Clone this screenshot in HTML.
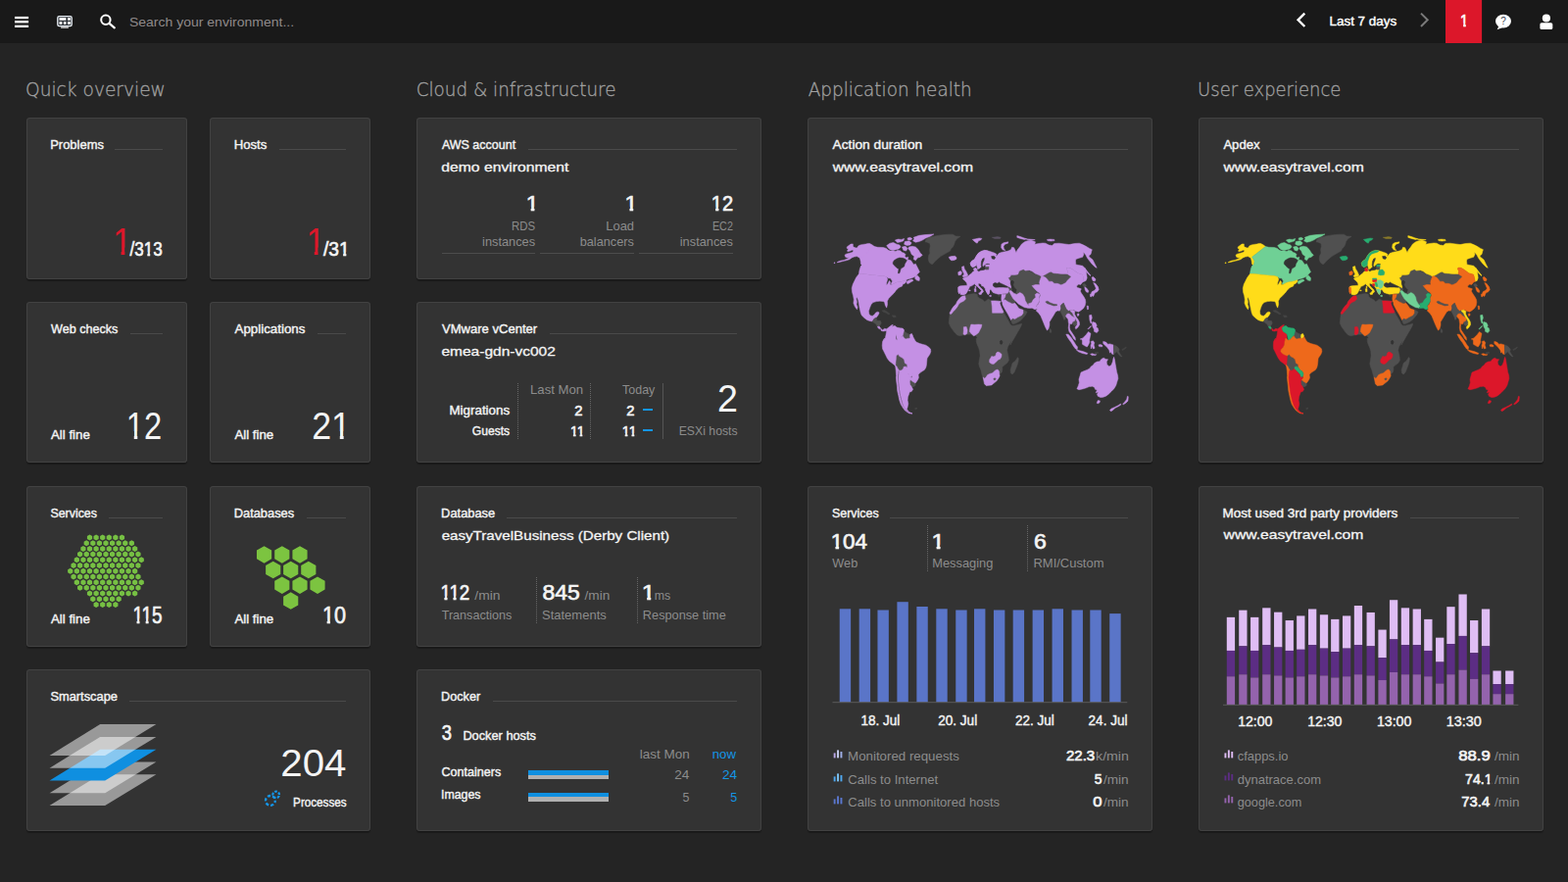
<!DOCTYPE html>
<html lang="en">
<head>
<meta charset="utf-8">
<title>Dashboard</title>
<style>
*{box-sizing:border-box}
html,body{margin:0;padding:0}
body{width:1600px;height:900px;overflow:hidden;background:#242424;font-family:"Liberation Sans",sans-serif;position:relative;color:#f4f4f4}
.topbar{position:absolute;background:#191919}
main{position:absolute;left:0;top:0;width:1600px;height:900px}
.tile{position:absolute;background:#333;border-radius:3.5px;box-shadow:inset 0 0 0 1px #424242,0 1.5px 1px rgba(0,0,0,.3)}
.t{position:absolute;white-space:nowrap;line-height:1;transform-origin:0 50%;margin:0;font-weight:400;font-style:normal}
.tt{-webkit-text-stroke:.4px currentColor}
.st{-webkit-text-stroke:.3px currentColor}
.nm{-webkit-text-stroke:.65px currentColor}
.dl{font-family:"DejaVu Sans Light","Liberation Sans",sans-serif}
.r{position:absolute;display:block}
.g{position:absolute;display:block;overflow:visible}
h2{position:absolute;margin:0;font-weight:400;font-size:20px;line-height:1;color:#a2a2a2;white-space:nowrap;transform-origin:0 50%;font-family:"DejaVu Sans Light","Liberation Sans",sans-serif;-webkit-text-stroke:.3px currentColor}
</style>
</head>
<body>
<header class="topbar" style="left:0px;top:0px;width:1600px;height:44px">
<svg class="g" style="left:0px;top:0px;" width="1600" height="44" viewBox="0 0 1600 44"><g fill="#fff"><rect x="15" y="16.9" width="14.1" height="2.3"/><rect x="15" y="21.1" width="14.1" height="2.3"/><rect x="15" y="25.7" width="14.1" height="2.3"/></g><rect x="58.8" y="16.7" width="14.4" height="9.9" rx="1.6" fill="#2a2f35" stroke="#eef4fa" stroke-width="1.3"/><g fill="#fff"><rect x="60.5" y="18.1" width="6.9" height="2.7"/><rect x="69" y="18.1" width="2.9" height="2.7"/><rect x="60.5" y="22.1" width="2.9" height="2.8"/><rect x="64.9" y="22.1" width="2.6" height="2.8"/><rect x="69" y="22.1" width="2.9" height="2.8"/></g><rect x="62.1" y="27.3" width="7.8" height="1.5" fill="#d8d8d8"/><circle cx="107.9" cy="20.3" r="4.7" fill="none" stroke="#fff" stroke-width="2"/><path d="M111.5 23.8L116.8 28.4" stroke="#fff" stroke-width="2.2" stroke-linecap="round"/><path d="M1331.3 13.6L1324.6 20.3L1331.3 27" fill="none" stroke="#fff" stroke-width="2.4"/><path d="M1450 13.6L1456.7 20.3L1450 27" fill="none" stroke="#7a7a7a" stroke-width="2"/><rect x="1475" y="0" width="37.1" height="44" fill="#dc172a"/><ellipse cx="1534" cy="21.6" rx="8" ry="6.9" fill="#fff"/><path d="M1529.5 26.5L1527.6 30.2L1533 28.3Z" fill="#fff"/><circle cx="1577.9" cy="18.5" r="4.1" fill="#fff"/><rect x="1571.4" y="23.3" width="12.9" height="6.7" rx="1.6" fill="#fff"/></svg>
<span class="t" style="left:131px;top:16px;font-size:13.2px;color:#8f8a8a;transform:translateX(0.88px) scaleX(1.0625);">Search your environment...</span>
<span class="t tt" style="left:1356px;top:15px;font-size:13px;color:#fff;transform:translateX(0.58px) scaleX(1.0303);">Last 7 days</span>
<span class="t nm" style="left:1490px;top:13px;font-size:17px;clip-path:polygon(-2px -2px,calc(100% + 2px) -2px,calc(100% + 2px) calc(100% + 2px),9.77px calc(100% + 2px),9.77px 10.6px,6.58px 10.6px,6.58px calc(100% + 2px),3.55px calc(100% + 2px),3.55px 10.6px,-0.3px 10.6px,-0.3px calc(100% + 2px),-2px calc(100% + 2px));color:#fff;transform:translateX(0.12px) scaleX(0.8561);">1</span>
<span class="t" style="left:1531px;top:17px;font-size:10px;color:#3a4450;transform:translateX(0.2px);">?</span>
</header>
<main>
<section>
<h2 style="left:26px;top:81px;transform:translateX(0.01px) scaleX(0.9300)">Quick overview</h2>
<article class="tile" style="left:27px;top:120px;width:164px;height:165px">
<h3 class="t tt" style="left:24px;top:21px;font-size:13px;transform:translateX(0.21px) scaleX(0.9960);">Problems</h3>
<i class="r" style="left:90.4px;top:32px;width:48.8px;height:1px;background:#4a4a4a;"></i>
<span class="t" style="left:88px;top:108px;font-size:38px;clip-path:polygon(-2px -2px,calc(100% + 2px) -2px,calc(100% + 2px) calc(100% + 2px),21.44px calc(100% + 2px),21.44px 24.4px,13.32px 24.4px,13.32px calc(100% + 2px),9.2px calc(100% + 2px),9.2px 24.4px,-0.3px 24.4px,-0.3px calc(100% + 2px),-2px calc(100% + 2px));color:#dc172a;transform:translateX(0.06px) scaleX(0.9278);">1</span>
<span class="t nm" style="left:105px;top:124px;font-size:20px;clip-path:polygon(-2px -2px,calc(100% + 2px) -2px,calc(100% + 2px) calc(100% + 2px),28.11px calc(100% + 2px),28.11px 13px,24.29px 13px,24.29px calc(100% + 2px),20.99px calc(100% + 2px),20.99px 13px,16.39px 13px,16.39px calc(100% + 2px),-2px calc(100% + 2px));transform:translateX(0.45px) scaleX(0.8546);">/313</span>
</article>
<article class="tile" style="left:214px;top:120px;width:164px;height:165px">
<h3 class="t tt" style="left:24px;top:21px;font-size:13px;transform:translateX(0.68px) scaleX(1.0115);">Hosts</h3>
<i class="r" style="left:70.6px;top:32px;width:68.6px;height:1px;background:#4a4a4a;"></i>
<span class="t" style="left:98px;top:108px;font-size:38px;clip-path:polygon(-2px -2px,calc(100% + 2px) -2px,calc(100% + 2px) calc(100% + 2px),21.44px calc(100% + 2px),21.44px 24.4px,13.32px 24.4px,13.32px calc(100% + 2px),9.2px calc(100% + 2px),9.2px 24.4px,-0.3px 24.4px,-0.3px calc(100% + 2px),-2px calc(100% + 2px));color:#dc172a;transform:translateX(0.38px) scaleX(0.9132);">1</span>
<span class="t nm" style="left:115px;top:124px;font-size:20px;clip-path:polygon(-2px -2px,calc(100% + 2px) -2px,calc(100% + 2px) calc(100% + 2px),28.11px calc(100% + 2px),28.11px 13px,24.29px 13px,24.29px calc(100% + 2px),20.99px calc(100% + 2px),20.99px 13px,16.39px 13px,16.39px calc(100% + 2px),-2px calc(100% + 2px));transform:translateX(0.95px) scaleX(0.9631);">/31</span>
</article>
<article class="tile" style="left:27px;top:308px;width:164px;height:164px">
<h3 class="t tt" style="left:25px;top:21px;font-size:13px;transform:scaleX(0.9679);">Web checks</h3>
<i class="r" style="left:105.7px;top:32px;width:33.5px;height:1px;background:#4a4a4a;"></i>
<span class="t tt" style="left:24px;top:129px;font-size:13px;transform:translateX(0.98px) scaleX(1.0214);">All fine</span>
<span class="t" style="left:101px;top:107px;font-size:39.5px;clip-path:polygon(-2px -2px,calc(100% + 2px) -2px,calc(100% + 2px) calc(100% + 2px),22.27px calc(100% + 2px),22.27px 25.1px,13.83px 25.1px,13.83px calc(100% + 2px),9.57px calc(100% + 2px),9.57px 25.1px,-0.3px 25.1px,-0.3px calc(100% + 2px),-2px calc(100% + 2px));transform:translateX(0.84px) scaleX(0.8271);">12</span>
</article>
<article class="tile" style="left:214px;top:308px;width:164px;height:164px">
<h3 class="t tt" style="left:25px;top:21px;font-size:13px;transform:translateX(0.58px) scaleX(1.0237);">Applications</h3>
<i class="r" style="left:109.9px;top:32px;width:29.3px;height:1px;background:#4a4a4a;"></i>
<span class="t tt" style="left:25px;top:129px;font-size:13px;transform:translateX(0.42px) scaleX(1.0201);">All fine</span>
<span class="t" style="left:104px;top:107px;font-size:39.5px;clip-path:polygon(-2px -2px,calc(100% + 2px) -2px,calc(100% + 2px) calc(100% + 2px),44.24px calc(100% + 2px),44.24px 25.1px,35.8px 25.1px,35.8px calc(100% + 2px),31.54px calc(100% + 2px),31.54px 25.1px,21.67px 25.1px,21.67px calc(100% + 2px),-2px calc(100% + 2px));transform:translateX(0.22px) scaleX(0.9056);">21</span>
</article>
<article class="tile" style="left:27px;top:496px;width:164px;height:164px">
<h3 class="t tt" style="left:24px;top:21px;font-size:13px;transform:translateX(0.4px) scaleX(0.9540);">Services</h3>
<i class="r" style="left:84.2px;top:32px;width:55px;height:1px;background:#4a4a4a;"></i>
<svg class="g" style="left:37px;top:46px;" width="90" height="82" viewBox="64 542 90 82"><path fill="#76c043" d="M91.52 545.5L94.12 547L94.12 550L91.52 551.5L88.92 550L88.92 547ZM98.11 545.5L100.71 547L100.71 550L98.11 551.5L95.51 550L95.51 547ZM104.7 545.5L107.3 547L107.3 550L104.7 551.5L102.1 550L102.1 547ZM111.29 545.5L113.89 547L113.89 550L111.29 551.5L108.69 550L108.69 547ZM117.88 545.5L120.48 547L120.48 550L117.88 551.5L115.28 550L115.28 547ZM124.47 545.5L127.07 547L127.07 550L124.47 551.5L121.87 550L121.87 547ZM88.22 551.21L90.82 552.71L90.82 555.71L88.22 557.21L85.63 555.71L85.63 552.71ZM94.81 551.21L97.41 552.71L97.41 555.71L94.81 557.21L92.22 555.71L92.22 552.71ZM101.41 551.21L104 552.71L104 555.71L101.41 557.21L98.81 555.71L98.81 552.71ZM108 551.21L110.59 552.71L110.59 555.71L108 557.21L105.4 555.71L105.4 552.71ZM114.59 551.21L117.18 552.71L117.18 555.71L114.59 557.21L111.99 555.71L111.99 552.71ZM121.17 551.21L123.77 552.71L123.77 555.71L121.17 557.21L118.58 555.71L118.58 552.71ZM127.77 551.21L130.36 552.71L130.36 555.71L127.77 557.21L125.17 555.71L125.17 552.71ZM134.35 551.21L136.95 552.71L136.95 555.71L134.35 557.21L131.76 555.71L131.76 552.71ZM84.93 556.91L87.53 558.41L87.53 561.41L84.93 562.91L82.33 561.41L82.33 558.41ZM91.52 556.91L94.12 558.41L94.12 561.41L91.52 562.91L88.92 561.41L88.92 558.41ZM98.11 556.91L100.71 558.41L100.71 561.41L98.11 562.91L95.51 561.41L95.51 558.41ZM104.7 556.91L107.3 558.41L107.3 561.41L104.7 562.91L102.1 561.41L102.1 558.41ZM111.29 556.91L113.89 558.41L113.89 561.41L111.29 562.91L108.69 561.41L108.69 558.41ZM117.88 556.91L120.48 558.41L120.48 561.41L117.88 562.91L115.28 561.41L115.28 558.41ZM124.47 556.91L127.07 558.41L127.07 561.41L124.47 562.91L121.87 561.41L121.87 558.41ZM131.06 556.91L133.66 558.41L133.66 561.41L131.06 562.91L128.46 561.41L128.46 558.41ZM137.65 556.91L140.25 558.41L140.25 561.41L137.65 562.91L135.05 561.41L135.05 558.41ZM81.64 562.62L84.23 564.12L84.23 567.12L81.64 568.62L79.04 567.12L79.04 564.12ZM88.22 562.62L90.82 564.12L90.82 567.12L88.22 568.62L85.63 567.12L85.63 564.12ZM94.81 562.62L97.41 564.12L97.41 567.12L94.81 568.62L92.22 567.12L92.22 564.12ZM101.41 562.62L104 564.12L104 567.12L101.41 568.62L98.81 567.12L98.81 564.12ZM108 562.62L110.59 564.12L110.59 567.12L108 568.62L105.4 567.12L105.4 564.12ZM114.59 562.62L117.18 564.12L117.18 567.12L114.59 568.62L111.99 567.12L111.99 564.12ZM121.17 562.62L123.77 564.12L123.77 567.12L121.17 568.62L118.58 567.12L118.58 564.12ZM127.77 562.62L130.36 564.12L130.36 567.12L127.77 568.62L125.17 567.12L125.17 564.12ZM134.35 562.62L136.95 564.12L136.95 567.12L134.35 568.62L131.76 567.12L131.76 564.12ZM140.94 562.62L143.54 564.12L143.54 567.12L140.94 568.62L138.35 567.12L138.35 564.12ZM78.34 568.32L80.94 569.82L80.94 572.82L78.34 574.32L75.74 572.82L75.74 569.82ZM84.93 568.32L87.53 569.82L87.53 572.82L84.93 574.32L82.33 572.82L82.33 569.82ZM91.52 568.32L94.12 569.82L94.12 572.82L91.52 574.32L88.92 572.82L88.92 569.82ZM98.11 568.32L100.71 569.82L100.71 572.82L98.11 574.32L95.51 572.82L95.51 569.82ZM104.7 568.32L107.3 569.82L107.3 572.82L104.7 574.32L102.1 572.82L102.1 569.82ZM111.29 568.32L113.89 569.82L113.89 572.82L111.29 574.32L108.69 572.82L108.69 569.82ZM117.88 568.32L120.48 569.82L120.48 572.82L117.88 574.32L115.28 572.82L115.28 569.82ZM124.47 568.32L127.07 569.82L127.07 572.82L124.47 574.32L121.87 572.82L121.87 569.82ZM131.06 568.32L133.66 569.82L133.66 572.82L131.06 574.32L128.46 572.82L128.46 569.82ZM137.65 568.32L140.25 569.82L140.25 572.82L137.65 574.32L135.05 572.82L135.05 569.82ZM144.24 568.32L146.84 569.82L146.84 572.82L144.24 574.32L141.64 572.82L141.64 569.82ZM75.05 574.02L77.64 575.52L77.64 578.52L75.05 580.02L72.45 578.52L72.45 575.52ZM81.64 574.02L84.23 575.52L84.23 578.52L81.64 580.02L79.04 578.52L79.04 575.52ZM88.22 574.02L90.82 575.52L90.82 578.52L88.22 580.02L85.63 578.52L85.63 575.52ZM94.81 574.02L97.41 575.52L97.41 578.52L94.81 580.02L92.22 578.52L92.22 575.52ZM101.41 574.02L104 575.52L104 578.52L101.41 580.02L98.81 578.52L98.81 575.52ZM108 574.02L110.59 575.52L110.59 578.52L108 580.02L105.4 578.52L105.4 575.52ZM114.59 574.02L117.18 575.52L117.18 578.52L114.59 580.02L111.99 578.52L111.99 575.52ZM121.17 574.02L123.77 575.52L123.77 578.52L121.17 580.02L118.58 578.52L118.58 575.52ZM127.77 574.02L130.36 575.52L130.36 578.52L127.77 580.02L125.17 578.52L125.17 575.52ZM134.35 574.02L136.95 575.52L136.95 578.52L134.35 580.02L131.76 578.52L131.76 575.52ZM140.94 574.02L143.54 575.52L143.54 578.52L140.94 580.02L138.35 578.52L138.35 575.52ZM71.75 579.73L74.35 581.23L74.35 584.23L71.75 585.73L69.15 584.23L69.15 581.23ZM78.34 579.73L80.94 581.23L80.94 584.23L78.34 585.73L75.74 584.23L75.74 581.23ZM84.93 579.73L87.53 581.23L87.53 584.23L84.93 585.73L82.33 584.23L82.33 581.23ZM91.52 579.73L94.12 581.23L94.12 584.23L91.52 585.73L88.92 584.23L88.92 581.23ZM98.11 579.73L100.71 581.23L100.71 584.23L98.11 585.73L95.51 584.23L95.51 581.23ZM104.7 579.73L107.3 581.23L107.3 584.23L104.7 585.73L102.1 584.23L102.1 581.23ZM111.29 579.73L113.89 581.23L113.89 584.23L111.29 585.73L108.69 584.23L108.69 581.23ZM117.88 579.73L120.48 581.23L120.48 584.23L117.88 585.73L115.28 584.23L115.28 581.23ZM124.47 579.73L127.07 581.23L127.07 584.23L124.47 585.73L121.87 584.23L121.87 581.23ZM131.06 579.73L133.66 581.23L133.66 584.23L131.06 585.73L128.46 584.23L128.46 581.23ZM137.65 579.73L140.25 581.23L140.25 584.23L137.65 585.73L135.05 584.23L135.05 581.23ZM75.05 585.43L77.64 586.93L77.64 589.93L75.05 591.43L72.45 589.93L72.45 586.93ZM81.64 585.43L84.23 586.93L84.23 589.93L81.64 591.43L79.04 589.93L79.04 586.93ZM88.22 585.43L90.82 586.93L90.82 589.93L88.22 591.43L85.63 589.93L85.63 586.93ZM94.81 585.43L97.41 586.93L97.41 589.93L94.81 591.43L92.22 589.93L92.22 586.93ZM101.41 585.43L104 586.93L104 589.93L101.41 591.43L98.81 589.93L98.81 586.93ZM108 585.43L110.59 586.93L110.59 589.93L108 591.43L105.4 589.93L105.4 586.93ZM114.59 585.43L117.18 586.93L117.18 589.93L114.59 591.43L111.99 589.93L111.99 586.93ZM121.17 585.43L123.77 586.93L123.77 589.93L121.17 591.43L118.58 589.93L118.58 586.93ZM127.77 585.43L130.36 586.93L130.36 589.93L127.77 591.43L125.17 589.93L125.17 586.93ZM134.35 585.43L136.95 586.93L136.95 589.93L134.35 591.43L131.76 589.93L131.76 586.93ZM140.94 585.43L143.54 586.93L143.54 589.93L140.94 591.43L138.35 589.93L138.35 586.93ZM78.34 591.14L80.94 592.64L80.94 595.64L78.34 597.14L75.74 595.64L75.74 592.64ZM84.93 591.14L87.53 592.64L87.53 595.64L84.93 597.14L82.33 595.64L82.33 592.64ZM91.52 591.14L94.12 592.64L94.12 595.64L91.52 597.14L88.92 595.64L88.92 592.64ZM98.11 591.14L100.71 592.64L100.71 595.64L98.11 597.14L95.51 595.64L95.51 592.64ZM104.7 591.14L107.3 592.64L107.3 595.64L104.7 597.14L102.1 595.64L102.1 592.64ZM111.29 591.14L113.89 592.64L113.89 595.64L111.29 597.14L108.69 595.64L108.69 592.64ZM117.88 591.14L120.48 592.64L120.48 595.64L117.88 597.14L115.28 595.64L115.28 592.64ZM124.47 591.14L127.07 592.64L127.07 595.64L124.47 597.14L121.87 595.64L121.87 592.64ZM131.06 591.14L133.66 592.64L133.66 595.64L131.06 597.14L128.46 595.64L128.46 592.64ZM137.65 591.14L140.25 592.64L140.25 595.64L137.65 597.14L135.05 595.64L135.05 592.64ZM144.24 591.14L146.84 592.64L146.84 595.64L144.24 597.14L141.64 595.64L141.64 592.64ZM81.64 596.85L84.23 598.35L84.23 601.35L81.64 602.85L79.04 601.35L79.04 598.35ZM88.22 596.85L90.82 598.35L90.82 601.35L88.22 602.85L85.63 601.35L85.63 598.35ZM94.81 596.85L97.41 598.35L97.41 601.35L94.81 602.85L92.22 601.35L92.22 598.35ZM101.41 596.85L104 598.35L104 601.35L101.41 602.85L98.81 601.35L98.81 598.35ZM108 596.85L110.59 598.35L110.59 601.35L108 602.85L105.4 601.35L105.4 598.35ZM114.59 596.85L117.18 598.35L117.18 601.35L114.59 602.85L111.99 601.35L111.99 598.35ZM121.17 596.85L123.77 598.35L123.77 601.35L121.17 602.85L118.58 601.35L118.58 598.35ZM127.77 596.85L130.36 598.35L130.36 601.35L127.77 602.85L125.17 601.35L125.17 598.35ZM134.35 596.85L136.95 598.35L136.95 601.35L134.35 602.85L131.76 601.35L131.76 598.35ZM140.94 596.85L143.54 598.35L143.54 601.35L140.94 602.85L138.35 601.35L138.35 598.35ZM91.52 602.55L94.12 604.05L94.12 607.05L91.52 608.55L88.92 607.05L88.92 604.05ZM98.11 602.55L100.71 604.05L100.71 607.05L98.11 608.55L95.51 607.05L95.51 604.05ZM104.7 602.55L107.3 604.05L107.3 607.05L104.7 608.55L102.1 607.05L102.1 604.05ZM111.29 602.55L113.89 604.05L113.89 607.05L111.29 608.55L108.69 607.05L108.69 604.05ZM117.88 602.55L120.48 604.05L120.48 607.05L117.88 608.55L115.28 607.05L115.28 604.05ZM124.47 602.55L127.07 604.05L127.07 607.05L124.47 608.55L121.87 607.05L121.87 604.05ZM131.06 602.55L133.66 604.05L133.66 607.05L131.06 608.55L128.46 607.05L128.46 604.05ZM137.65 602.55L140.25 604.05L140.25 607.05L137.65 608.55L135.05 607.05L135.05 604.05ZM94.81 608.25L97.41 609.75L97.41 612.75L94.81 614.25L92.22 612.75L92.22 609.75ZM101.41 608.25L104 609.75L104 612.75L101.41 614.25L98.81 612.75L98.81 609.75ZM108 608.25L110.59 609.75L110.59 612.75L108 614.25L105.4 612.75L105.4 609.75ZM114.59 608.25L117.18 609.75L117.18 612.75L114.59 614.25L111.99 612.75L111.99 609.75ZM121.17 608.25L123.77 609.75L123.77 612.75L121.17 614.25L118.58 612.75L118.58 609.75ZM98.11 613.96L100.71 615.46L100.71 618.46L98.11 619.96L95.51 618.46L95.51 615.46ZM104.7 613.96L107.3 615.46L107.3 618.46L104.7 619.96L102.1 618.46L102.1 615.46ZM111.29 613.96L113.89 615.46L113.89 618.46L111.29 619.96L108.69 618.46L108.69 615.46ZM117.88 613.96L120.48 615.46L120.48 618.46L117.88 619.96L115.28 618.46L115.28 615.46Z"/></svg>
<span class="t tt" style="left:24px;top:129px;font-size:13px;transform:translateX(0.98px) scaleX(1.0214);">All fine</span>
<span class="t nm" style="left:108px;top:120px;font-size:24px;clip-path:polygon(-2px -2px,calc(100% + 2px) -2px,calc(100% + 2px) calc(100% + 2px),25.22px calc(100% + 2px),25.22px 15.2px,20.52px 15.2px,20.52px calc(100% + 2px),16.86px calc(100% + 2px),16.86px 15.2px,8.96px 15.2px,8.96px calc(100% + 2px),5.3px calc(100% + 2px),5.3px 15.2px,-0.3px 15.2px,-0.3px calc(100% + 2px),-2px calc(100% + 2px));transform:translateX(0.39px) scaleX(0.7891);">115</span>
</article>
<article class="tile" style="left:214px;top:496px;width:164px;height:164px">
<h3 class="t tt" style="left:24px;top:21px;font-size:13px;transform:translateX(0.7px) scaleX(0.9892);">Databases</h3>
<i class="r" style="left:99px;top:32px;width:40.2px;height:1px;background:#4a4a4a;"></i>
<svg class="g" style="left:44px;top:58px;" width="78" height="70" viewBox="258 554 78 70"><path fill="#7cc440" d="M269.55 557.15L277.13 561.52L277.13 570.27L269.55 574.65L261.97 570.27L261.97 561.52ZM287.8 557.15L295.38 561.52L295.38 570.27L287.8 574.65L280.22 570.27L280.22 561.52ZM306 557.15L313.58 561.52L313.58 570.27L306 574.65L298.42 570.27L298.42 561.52ZM278.7 572.75L286.28 577.12L286.28 585.88L278.7 590.25L271.12 585.88L271.12 577.12ZM296.7 572.75L304.28 577.12L304.28 585.88L296.7 590.25L289.12 585.88L289.12 577.12ZM314.8 572.75L322.38 577.12L322.38 585.88L314.8 590.25L307.22 585.88L307.22 577.12ZM287.8 588.45L295.38 592.83L295.38 601.58L287.8 605.95L280.22 601.58L280.22 592.83ZM306 588.45L313.58 592.83L313.58 601.58L306 605.95L298.42 601.58L298.42 592.83ZM324 588.45L331.58 592.83L331.58 601.58L324 605.95L316.42 601.58L316.42 592.83ZM296.7 604.35L304.28 608.73L304.28 617.48L296.7 621.85L289.12 617.48L289.12 608.73Z"/></svg>
<span class="t tt" style="left:25px;top:129px;font-size:13px;transform:translateX(0.42px) scaleX(1.0201);">All fine</span>
<span class="t nm" style="left:114px;top:120px;font-size:24px;clip-path:polygon(-2px -2px,calc(100% + 2px) -2px,calc(100% + 2px) calc(100% + 2px),13.66px calc(100% + 2px),13.66px 15.2px,8.96px 15.2px,8.96px calc(100% + 2px),5.3px calc(100% + 2px),5.3px 15.2px,-0.3px 15.2px,-0.3px calc(100% + 2px),-2px calc(100% + 2px));transform:translateX(0.9px) scaleX(0.9013);">10</span>
</article>
<article class="tile" style="left:27px;top:683px;width:351px;height:165px">
<h3 class="t tt" style="left:24px;top:21px;font-size:13px;transform:translateX(0.38px) scaleX(0.9889);">Smartscape</h3>
<i class="r" style="left:105px;top:32px;width:221.2px;height:1px;background:#4a4a4a;"></i>
<svg class="g" style="left:21px;top:53px;" width="114" height="90" viewBox="48 736 114 90"><path fill="#fff" fill-opacity="0.5" d="M102.2 790.22L159.4 790.22L107.2 822.02L50.6 822.02Z"/><path fill="#fff" fill-opacity="0.5" d="M102.2 777.44L159.4 777.44L107.2 809.24L50.6 809.24Z"/><path fill="#0f8fe0" fill-opacity="1" d="M102.2 764.66L159.4 764.66L107.2 796.46L50.6 796.46Z"/><path fill="#fff" fill-opacity="0.5" d="M102.2 751.88L159.4 751.88L107.2 783.68L50.6 783.68Z"/><path fill="#fff" fill-opacity="0.5" d="M102.2 739.1L159.4 739.1L107.2 770.9L50.6 770.9Z"/></svg>
<span class="t" style="left:259px;top:76px;font-size:39.5px;transform:translateX(0.35px) scaleX(1.0182);">204</span>
<span class="t tt" style="left:272px;top:129px;font-size:13px;transform:translateX(0.1px) scaleX(0.8981);">Processes</span>
<svg class="g" style="left:241px;top:122px;" width="20" height="20" viewBox="268 805 20 20"><g fill="none" stroke="#1596ea"><circle cx="275.9" cy="816.9" r="4.9" stroke-width="2.3" stroke-dasharray="3.2 1.93" stroke-dashoffset="1"/><circle cx="281.7" cy="810.9" r="3.3" stroke-width="2.2" stroke-dasharray="2.7 1.45" stroke-dashoffset="3"/></g></svg>
</article>
</section>
<section>
<h2 style="left:424px;top:81px;transform:translateX(0.63px) scaleX(0.9184)">Cloud &amp; infrastructure</h2>
<article class="tile" style="left:425px;top:120px;width:352px;height:165px">
<h3 class="t tt" style="left:25px;top:21px;font-size:13px;transform:translateX(0.89px) scaleX(0.9609);">AWS account</h3>
<i class="r" style="left:114.1px;top:32px;width:213.1px;height:1px;background:#4a4a4a;"></i>
<span class="t st" style="left:25px;top:44px;font-size:13px;transform:translateX(0.28px) scaleX(1.2079);">demo environment</span>
<span class="t nm" style="left:111px;top:78px;font-size:21.5px;clip-path:polygon(-2px -2px,calc(100% + 2px) -2px,calc(100% + 2px) calc(100% + 2px),12.27px calc(100% + 2px),12.27px 12.7px,8.11px 12.7px,8.11px calc(100% + 2px),4.67px calc(100% + 2px),4.67px 12.7px,-0.3px 12.7px,-0.3px calc(100% + 2px),-2px calc(100% + 2px));transform:translateX(0.71px) scaleX(1.0722);">1</span>
<span class="t" style="left:96px;top:104px;font-size:13px;color:#8c8c8c;transform:translateX(0.93px) scaleX(0.8775);">RDS</span>
<span class="t" style="left:67px;top:120px;font-size:13px;color:#8c8c8c;transform:translateX(0.06px) scaleX(0.9840);">instances</span>
<i class="r" style="left:25.7px;top:138.3px;width:95.3px;height:1.2px;background:#4d4d4d;"></i>
<span class="t nm" style="left:212px;top:78px;font-size:21.5px;clip-path:polygon(-2px -2px,calc(100% + 2px) -2px,calc(100% + 2px) calc(100% + 2px),12.27px calc(100% + 2px),12.27px 12.7px,8.11px 12.7px,8.11px calc(100% + 2px),4.67px calc(100% + 2px),4.67px 12.7px,-0.3px 12.7px,-0.3px calc(100% + 2px),-2px calc(100% + 2px));transform:translateX(0.51px) scaleX(1.0725);">1</span>
<span class="t" style="left:193px;top:104px;font-size:13px;color:#8c8c8c;transform:translateX(0.27px) scaleX(0.9946);">Load</span>
<span class="t" style="left:166px;top:120px;font-size:13px;color:#8c8c8c;transform:translateX(0.73px) scaleX(0.9766);">balancers</span>
<i class="r" style="left:126.1px;top:138.3px;width:95.6px;height:1.2px;background:#4d4d4d;"></i>
<span class="t nm" style="left:300px;top:78px;font-size:21.5px;clip-path:polygon(-2px -2px,calc(100% + 2px) -2px,calc(100% + 2px) calc(100% + 2px),12.27px calc(100% + 2px),12.27px 12.7px,8.11px 12.7px,8.11px calc(100% + 2px),4.67px calc(100% + 2px),4.67px 12.7px,-0.3px 12.7px,-0.3px calc(100% + 2px),-2px calc(100% + 2px));transform:translateX(0.81px) scaleX(0.9326);">12</span>
<span class="t" style="left:301px;top:104px;font-size:13px;color:#8c8c8c;transform:translateX(0.91px) scaleX(0.8291);">EC2</span>
<span class="t" style="left:268px;top:120px;font-size:13px;color:#8c8c8c;transform:translateX(0.78px) scaleX(0.9838);">instances</span>
<i class="r" style="left:226.8px;top:138.3px;width:96.1px;height:1.2px;background:#4d4d4d;"></i>
</article>
<article class="tile" style="left:425px;top:308px;width:352px;height:164px">
<h3 class="t tt" style="left:25px;top:21px;font-size:13px;transform:translateX(0.98px) scaleX(1.0033);">VMware vCenter</h3>
<i class="r" style="left:135.6px;top:32px;width:191.6px;height:1px;background:#4a4a4a;"></i>
<span class="t st" style="left:25px;top:44px;font-size:13px;transform:translateX(0.42px) scaleX(1.1933);">emea-gdn-vc002</span>
<span class="t tt" style="left:33px;top:104px;font-size:13px;transform:translateX(0.45px) scaleX(1.0283);">Migrations</span>
<span class="t tt" style="left:56px;top:125px;font-size:13px;transform:translateX(0.81px) scaleX(0.9312);">Guests</span>
<i class="r" style="left:102.8px;top:83.4px;width:0px;height:56.3px;background:none;border-left:1px dotted #666;"></i>
<span class="t" style="left:115px;top:83px;font-size:13px;color:#8c8c8c;transform:translateX(0.99px) scaleX(1.0127);">Last Mon</span>
<span class="t nm" style="left:161px;top:103px;font-size:15px;transform:translateX(0.34px) scaleX(0.9841);">2</span>
<span class="t nm" style="left:157px;top:124px;font-size:15px;clip-path:polygon(-2px -2px,calc(100% + 2px) -2px,calc(100% + 2px) calc(100% + 2px),15.88px calc(100% + 2px),15.88px 10px,13.13px 10px,13.13px calc(100% + 2px),10.28px calc(100% + 2px),10.28px 10px,5.9px 10px,5.9px calc(100% + 2px),3.05px calc(100% + 2px),3.05px 10px,-0.3px 10px,-0.3px calc(100% + 2px),-2px calc(100% + 2px));transform:translateX(0.07px) scaleX(0.9300);">11</span>
<i class="r" style="left:177px;top:83.4px;width:0px;height:56.3px;background:none;border-left:1px dotted #666;"></i>
<span class="t" style="left:210px;top:83px;font-size:13px;color:#8c8c8c;transform:translateX(0.09px) scaleX(0.9584);">Today</span>
<span class="t nm" style="left:214px;top:103px;font-size:15px;transform:translateX(0.34px) scaleX(0.9867);">2</span>
<span class="t nm" style="left:209px;top:124px;font-size:15px;clip-path:polygon(-2px -2px,calc(100% + 2px) -2px,calc(100% + 2px) calc(100% + 2px),15.88px calc(100% + 2px),15.88px 10px,13.13px 10px,13.13px calc(100% + 2px),10.28px calc(100% + 2px),10.28px 10px,5.9px 10px,5.9px calc(100% + 2px),3.05px calc(100% + 2px),3.05px 10px,-0.3px 10px,-0.3px calc(100% + 2px),-2px calc(100% + 2px));transform:translateX(0.87px) scaleX(0.9443);">11</span>
<i class="r" style="left:231.3px;top:109px;width:9.5px;height:2px;background:#1496e6;"></i>
<i class="r" style="left:231.3px;top:130px;width:9.5px;height:2px;background:#1496e6;"></i>
<i class="r" style="left:251.1px;top:83.4px;width:0.9px;height:56.3px;background:#555;"></i>
<span class="t" style="left:306px;top:79px;font-size:39.5px;transform:translateX(0.94px) scaleX(0.9529);">2</span>
<span class="t" style="left:267px;top:125px;font-size:13px;color:#8c8c8c;transform:translateX(0.67px) scaleX(0.9427);">ESXi hosts</span>
</article>
<article class="tile" style="left:425px;top:496px;width:352px;height:164px">
<h3 class="t tt" style="left:25px;top:21px;font-size:13px;transform:translateX(0.11px) scaleX(0.9895);">Database</h3>
<i class="r" style="left:92.4px;top:32px;width:234.8px;height:1px;background:#4a4a4a;"></i>
<span class="t st" style="left:25px;top:44px;font-size:13px;transform:translateX(0.63px) scaleX(1.1647);">easyTravelBusiness (Derby Client)</span>
<span class="t nm" style="left:24px;top:99px;font-size:21.5px;clip-path:polygon(-2px -2px,calc(100% + 2px) -2px,calc(100% + 2px) calc(100% + 2px),22.63px calc(100% + 2px),22.63px 12.7px,18.47px 12.7px,18.47px calc(100% + 2px),15.03px calc(100% + 2px),15.03px 12.7px,8.11px 12.7px,8.11px calc(100% + 2px),4.67px calc(100% + 2px),4.67px 12.7px,-0.3px 12.7px,-0.3px calc(100% + 2px),-2px calc(100% + 2px));transform:translateX(0.38px) scaleX(0.8733);">112</span>
<span class="t" style="left:59px;top:105px;font-size:13px;color:#8c8c8c;transform:translateX(0.36px) scaleX(1.0652);">/min</span>
<span class="t" style="left:25px;top:125px;font-size:13px;color:#8c8c8c;transform:translateX(0.66px) scaleX(0.9691);">Transactions</span>
<span class="t nm" style="left:128px;top:99px;font-size:21.5px;transform:translateX(0.57px) scaleX(1.0659);">845</span>
<span class="t" style="left:171px;top:105px;font-size:13px;color:#8c8c8c;transform:translateX(0.57px) scaleX(1.0521);">/min</span>
<span class="t" style="left:128px;top:125px;font-size:13px;color:#8c8c8c;">Statements</span>
<span class="t nm" style="left:229px;top:99px;font-size:21.5px;clip-path:polygon(-2px -2px,calc(100% + 2px) -2px,calc(100% + 2px) calc(100% + 2px),12.27px calc(100% + 2px),12.27px 12.7px,8.11px 12.7px,8.11px calc(100% + 2px),4.67px calc(100% + 2px),4.67px 12.7px,-0.3px 12.7px,-0.3px calc(100% + 2px),-2px calc(100% + 2px));transform:translateX(0.86px) scaleX(1.1507);">1</span>
<span class="t" style="left:242px;top:105px;font-size:13px;color:#8c8c8c;transform:translateX(0.76px) scaleX(0.9498);">ms</span>
<span class="t" style="left:230px;top:125px;font-size:13px;color:#8c8c8c;transform:translateX(0.86px) scaleX(0.9788);">Response time</span>
<i class="r" style="left:122.2px;top:92.6px;width:0px;height:47.4px;background:none;border-left:1px dotted #666;"></i>
<i class="r" style="left:224.6px;top:92.6px;width:0px;height:47.4px;background:none;border-left:1px dotted #666;"></i>
</article>
<article class="tile" style="left:425px;top:683px;width:352px;height:165px">
<h3 class="t tt" style="left:25px;top:21px;font-size:13px;transform:translateX(0.11px) scaleX(0.9726);">Docker</h3>
<i class="r" style="left:78.1px;top:32px;width:249.1px;height:1px;background:#4a4a4a;"></i>
<span class="t nm" style="left:25px;top:55px;font-size:21.5px;transform:translateX(0.86px) scaleX(0.8544);">3</span>
<span class="t tt" style="left:47px;top:61px;font-size:13px;transform:translateX(0.39px) scaleX(0.9821);">Docker hosts</span>
<span class="t" style="left:227px;top:80px;font-size:13px;color:#8c8c8c;transform:translateX(0.84px) scaleX(1.0375);">last Mon</span>
<span class="t" style="left:301px;top:80px;font-size:13px;color:#1496e6;transform:translateX(0.78px) scaleX(1.0125);">now</span>
<span class="t tt" style="left:25px;top:98px;font-size:13px;transform:translateX(0.52px) scaleX(0.9668);">Containers</span>
<span class="t tt" style="left:25px;top:121px;font-size:13px;transform:translateX(0.05px) scaleX(0.9488);">Images</span>
<i class="r" style="left:114px;top:103.4px;width:81.7px;height:4.2px;background:#0f8fe0;"></i>
<i class="r" style="left:114px;top:107.6px;width:81.7px;height:4.4px;background:#b0b0b0;"></i>
<i class="r" style="left:114px;top:126px;width:81.7px;height:4.2px;background:#0f8fe0;"></i>
<i class="r" style="left:114px;top:130.2px;width:81.7px;height:4.4px;background:#b0b0b0;"></i>
<span class="t" style="left:263px;top:101px;font-size:13.5px;color:#8c8c8c;transform:translateX(0.22px) scaleX(1.0086);">24</span>
<span class="t" style="left:311px;top:101px;font-size:13.5px;color:#1496e6;transform:translateX(0.88px) scaleX(1.0064);">24</span>
<span class="t" style="left:271px;top:124px;font-size:13.5px;color:#8c8c8c;transform:translateX(0.56px) scaleX(0.9252);">5</span>
<span class="t" style="left:320px;top:124px;font-size:13.5px;color:#1496e6;transform:translateX(0.21px) scaleX(0.9256);">5</span>
</article>
</section>
<section>
<h2 style="left:824px;top:81px;transform:translateX(0.74px) scaleX(0.9204)">Application health</h2>
<article class="tile" style="left:824px;top:120px;width:352px;height:352px">
<h3 class="t tt" style="left:25px;top:21px;font-size:13px;transform:translateX(0.55px) scaleX(1.0565);">Action duration</h3>
<i class="r" style="left:129px;top:32px;width:198.2px;height:1px;background:#4a4a4a;"></i>
<span class="t st" style="left:25px;top:44px;font-size:13px;transform:translateX(0.63px) scaleX(1.2109);">www.easytravel.com</span>
<svg class="g map" style="left:24px;top:112px" width="310" height="200" viewBox="848 232 310 200" role="img" aria-label="World map"><path fill="#505050" stroke="#505050" stroke-width=".5" stroke-linejoin="round" d="M953.7 241L959.9 239.9L966.8 239.2L972.3 239.2L975.1 241L979.9 241.3L976.5 243.7L974.4 246.5L973.7 249.2L972.3 252L970.3 254L969.6 256.1L966.8 257.5L963.4 259.6L959.9 261.6L956.5 264.4L953.7 267.1L951.7 269.5L950.3 269.5L948.2 267.8L947.2 264.4L947.5 260.9L948.9 258.2L948.6 254.7L949.2 251.3L948.9 248.5L946.1 247.2L944.1 246.8L944.8 244.4L948.2 242.3Z"/><path fill="#c490e4" stroke="#c490e4" stroke-width=".5" stroke-linejoin="round" d="M892.3 251.6L890.2 250L887.5 248.5L885.8 248.4L883.3 249.1L880.6 249.4L877.8 250L875.8 250.9L874.9 252.7L873.4 252.9L871.6 252.3L870.4 251.6L870.3 248.9L868.2 249.1L866.1 250.5L864.2 252L864.2 253.4L865.8 253.9L864.6 255.8L864.9 256.8L867.5 256.1L869.9 255.1L870.9 256.1L869.6 257.5L866.1 258.5L863.4 259.2L862 260.2L862.7 262.3L864.4 263L866.8 262.7L864.7 264L861.3 265.4L857.9 266.1L855.1 267.1L854.1 267.8L856.5 267.5L859.9 266.6L863.4 265.8L866.8 264.7L869.2 263L871.6 262L874.4 261.6L876.5 262.7L877.5 263.7L878.2 266.4L878.5 269.5L879.6 270.6L880.6 269.2L880.9 266.4L879.9 264.4L878.5 262.3ZM851 268L852 267.8L852 268.6L851 268.6ZM892.3 251.6L895.7 252.3L901.3 252.5L904.4 253.4L906.1 255.1L908.1 256.1L910.9 255.8L914 256.5L915.7 255.4L918.5 255.8L920.5 257.5L922.6 258.2L924 259.6L923.3 261.6L924.7 263L926.7 262.3L926.4 264.4L925.4 265.8L926.7 265.1L929.5 265.8L930.9 267.8L932.2 269.9L934.3 269.2L935.7 271.9L937.1 274.7L938.4 277.5L936.4 279.5L935 281.6L932.2 283L928.8 284.3L926 285L924.7 285.7L921.9 286.8L918.5 287.4L915 288.1L912.3 289.2L910.2 290.5L909.2 289.5L910.6 287.1L909.5 285L908.1 283.7L906.8 284L904.7 282.6L901.3 281.5L894.4 280.9L887.5 280.2L880.6 279.5L876.5 279.5L876.8 276.8L877.5 274L878.5 271.3L879.6 270.6L880.6 269.2L880.9 266.4L879.9 264.4L878.5 262.3Z"/><path fill="#333333" stroke="#333333" stroke-width=".5" stroke-linejoin="round" d="M911.2 267.8L912.3 265.8L915 264L917.8 263L921.2 263.3L924 264.4L925.4 265.8L923.3 269.2L922.6 271.9L920.5 273.3L919.2 274L918.5 276.8L917.8 278.8L916.4 278.8L916.8 276.1L917.1 274.4L915 273.3L913 271.3L911.2 269.2Z"/><path fill="#c490e4" stroke="#c490e4" stroke-width=".5" stroke-linejoin="round" d="M904.7 250.6L908.1 248.2L911.6 247.5L915 249.2L917.8 249.9L919.2 252L917.1 254L914.3 254.7L911.6 255.4L908.1 254.7L906.1 252.7ZM913.3 245.1L916.4 244.1L919.9 244.4L922.6 243.4L921.9 245.8L919.2 246.8L915.7 247.5ZM927.4 252L930.9 251.3L934.3 252L937.1 254.7L939.1 258.2L941.2 260.2L939.1 262.3L936.4 263L934.3 265.8L932.2 264.4L932.9 261.6L930.2 259.6L928.8 256.1L926.7 254ZM932.2 242.3L937.8 240.3L944 239.6L952.9 238.9L949.5 241L944.6 243L941.2 245.1L937.8 246.5L934.3 247.2L931.6 245.8L932.9 243.7ZM923.3 246.5L927.4 245.8L930.2 247.8L928.8 249.9L925.4 250.6L922.6 249.2ZM920.5 252L924 251.3L926 253.4L924.7 256.1L921.9 255.4ZM926 243L928.8 242.3L930.9 243.7L928.8 245.1L926.4 244.7ZM925.4 287.1L928.1 285.7L930.9 285L931.9 286.4L929.5 287.8L926.7 289.5L925.4 289.2ZM934.3 281.6L936.4 281.2L938.4 283.7L938.1 286.4L935.7 286.1L933.6 284.3ZM876.5 279.5L880.6 279.5L887.5 280.2L894.4 280.9L901.3 281.5L904.7 282.6L905.7 285L904.7 288.5L904.4 291.2L906.1 289.2L907.5 286.4L908.5 287.8L908.1 290.5L910.2 290.5L912.3 289.2L915 288.1L918.5 287.4L921.9 286.8L924.7 285.7L925 287.1L923.3 289.2L921.2 290L920.5 292.1L917.1 293.4L914.3 296.2L912.3 299L909.5 301.7L906.8 304.5L905.4 307.2L905.5 310.7L904.7 314.1L903.3 311.4L902.6 308.6L901.3 307.6L897.8 307.2L894.4 307.6L890.9 308.6L888.9 310.7L887.5 314.1L886.4 317.6L886.8 320.3L888.2 322L890.2 322.4L892.3 321L893.7 318.9L895.7 318.2L897.1 318.9L896.4 321L894.4 323.8L893 324.4L891.6 325.8L890.2 327.9L887.5 327.5L884.7 326.5L882 324.4L879.2 321.7L878.2 318.9L877.1 314.1L876.5 310.7L875.8 306.5L874.4 303.1L873.7 304.8L874.4 307.9L874 310.7L875.1 313.4L874.4 315.8L872.3 312.7L870.9 309.3L871.3 305.8L870.6 301.7L869.6 298.3L869.2 294.1L870.3 290L873.7 283.1Z"/><path fill="#505050" stroke="#505050" stroke-width=".5" stroke-linejoin="round" d="M890.2 327.9L891.6 325.8L893 324.4L894.4 324.4L894.4 327.2L898.5 327.5L899.2 329.9L897.8 332L897.1 333L895.4 333.4L893.7 330.6L891.6 329.3Z"/><path fill="#c490e4" stroke="#c490e4" stroke-width=".5" stroke-linejoin="round" d="M895.4 333.4L897.1 333L898.5 334.8L897.5 335.8L896.1 334.8ZM898.5 335.1L900.6 336.8L902.6 335.3L904.7 335.8L904.4 337.5L901.3 338L899.2 337.4Z"/><path fill="#454545" stroke="#454545" stroke-width=".5" stroke-linejoin="round" d="M899.9 316.9L902.6 316.5L905.4 318.2L908.1 320.3L906.8 320.9L904 319.3L901.3 318.2ZM910.2 321.8L913.7 322L914.3 323.4L911.6 323.9Z"/><path fill="#505050" stroke="#505050" stroke-width=".5" stroke-linejoin="round" d="M921.9 337.5L924.7 339.6L927.4 341L929.1 342L928.8 345.1L926 345.4L924 346.1L922.3 344.4L921.2 342.3ZM914 362.6L916.4 361.5L917.8 363.6L920.6 365L922.6 367L923.3 370.5L925.7 371.9L925.7 374.3L922.6 375L921.3 376.3L919.9 378.1L917.5 378.4L916.1 376L915.1 373.9L913.7 372.6L914 367.7ZM928.8 387.4L930.9 389.1L934 391L934.2 393.2L932.3 394.7L930.2 394.4L928.7 392.5L928.3 389.8Z"/><path fill="#c490e4" stroke="#c490e4" stroke-width=".5" stroke-linejoin="round" d="M904.7 335.8L906.8 334.1L909.5 332L911.2 331.3L910.2 333.4L909.2 335.5L910.2 338.2L912.3 339.6L914.3 341L914 343.7L914.3 346.5L913 345L912 348.4L911.6 351.9L910.2 354.6L908.2 356.7L907.8 358.8L909.5 360.8L912.3 362.2L914.4 362.9L914.4 365.7L914 369.1L913.8 372.6L913 372.7L910.2 370.5L907.5 368.4L905.4 365.7L903.7 362.2L902 358.8L900.6 356L900.2 352.6L900.6 348.4L902.7 345L901.3 347.9L903.3 345.1L904 341.7L904.6 338.2ZM909.2 335.5L909.5 334.1L911.6 332.7L913.3 332.4L915 334.1L918.5 334.8L921.2 335.1L922.6 336.8L921.9 339.6L921.2 342.3L919.2 344.4L917.8 346.5L915.7 347.2L915 344.4L914.3 341L912.3 339.6L910.2 338.2ZM928.8 341L930.5 340.6L931.6 343L930.3 345.2L929.1 345.8L928.5 343.7ZM914.3 346.5L915.7 347.2L917.8 346.5L919.2 344.4L921.2 342.7L922.3 344.4L924 346.1L926 345.4L928.8 345.1L929.1 345.8L930.3 345.2L931.6 343.4L933.6 347.2L935 349.1L938.5 350.5L941.9 351.5L944.7 352.2L947.4 354L949.5 356L949.8 358.8L948.8 361.5L947.4 363.6L946 365.7L945.7 369.1L945.4 372.6L944.7 375.3L943.3 377.4L941.2 378.8L939.2 380.1L937.1 382.2L937.4 385.6L936.4 387.7L935 389.8L934 391L930.9 389.1L928.8 387.4L930.6 385.6L930.9 382.9L930.9 380.8L929.5 378.8L927.5 377.4L926.1 375.3L925.7 374.3L925.7 371.9L923.3 370.5L922.6 367L920.6 365L917.8 363.6L916.4 361.5L914.4 362.9L912.3 362.2L909.5 360.8L907.8 358.8L908.2 356.7L910.2 354.6L911.6 351.9L912 348.4L913 345ZM921.9 374.6L924 373.9L926.1 375.3L927.5 377.4L929.5 378.8L930.9 380.8L930.9 382.9L929.5 384.8L927.8 384.8L927.5 382.2L925.4 380.1L923.3 378.1L921.9 376.7ZM913 372.7L913.7 373.9L914.2 378.1L914.6 383.6L914.4 385L914.7 389.1L915.4 394L915.7 398.8L916.8 403.6L917.8 408.4L919.2 412.6L921.3 416L923.3 418.8L926.1 420.8L928.1 421.9L930.9 422L928.1 421L925.4 419.1L923.3 416.7L921.6 413.6L920.6 409.8L919.5 405.7L918.5 401.5L917.8 396L917.1 390.5L916.8 385L917.1 382.2L917.5 378.2L916.1 376L915.1 373.9L913.8 372.6ZM916.8 378.2L919.9 377.9L921.3 376.3L921.9 376.7L923.3 378.1L925.4 380.1L927.5 382.5L927.8 384.8L929.5 384.9L930.6 385.6L928.8 387.4L928.3 389.8L928.7 392.5L930.2 394.6L931.6 397.3L930.2 399.4L928.1 400.1L927.5 402.2L926.4 405L926.1 408.4L926.8 411.9L926.1 415.3L925.4 417.4L926.8 419.4L928.1 420.8L930.9 421.9L928.1 421.5L925.4 419.4L923 416.8L921.1 413.6L919.9 409.8L918.8 405.7L917.8 401.5L917.1 396L916.4 390.5L916 385L916.3 382.2Z"/><path fill="#454545" stroke="#454545" stroke-width=".5" stroke-linejoin="round" d="M933.3 417L935 416.1L936.1 416.5L934.7 417.7Z"/><path fill="#505050" stroke="#505050" stroke-width=".5" stroke-linejoin="round" d="M984.7 301.7L987.5 300.7L990.9 300L994.4 299.6L997.1 300.3L997.8 303.1L999.9 304.5L1002.6 305.8L1004.7 307.9L1006.8 306.5L1008.1 305.2L1010.9 306.2L1012.3 306.9L1015 306.9L1018.5 307.2L1021.2 307.6L1020.4 309.6L1020.9 311.4L1021.9 314.1L1023.6 317.6L1025.4 321L1027.4 324.4L1029.1 327.5L1030.9 331L1032.6 332.2L1035 332.2L1039.1 331.2L1042.6 330.3L1042.2 332L1040.5 335.5L1038.4 338.9L1035.7 343.7L1032.9 348.5L1030.9 352L1032.5 347.8L1030.4 350.5L1028.3 354L1027.6 357.4L1028.3 360.8L1029 364.3L1029.4 367.7L1027.6 370.5L1024.9 372.6L1022.8 374.6L1022.8 377.4L1022.1 380.1L1020.1 381.5L1019.7 384.3L1018 387.7L1015.2 390.5L1012.5 392.5L1009.7 393.2L1006.3 393.6L1004.2 391.8L1003.5 387.7L1002.8 384.9L1001.8 381.5L1000.8 377.4L999.4 373.9L998.7 371.2L999.4 367L1000.1 362.9L999.7 358.8L998.7 355.3L997.3 351.9L996.3 349.1L996.3 345L996.8 347.2L997.1 344.4L995.7 342.3L993 342.7L990.9 341L987.5 341.3L982.7 342L979.2 342.7L976.5 341.7L974.4 339.6L972.3 336.8L970.3 334.1L968.9 331.3L968.2 329.3L968.5 326.5L968.9 323.1L969.2 320.3L969.2 318.9L970.3 317.2L971.6 314.8L973.7 312L975.8 310L976.5 307.9L978.5 305.2L980.6 303.1L982.7 302.1Z"/><path fill="#333333" stroke="#333333" stroke-width=".5" stroke-linejoin="round" d="M1020.4 348.2L1021.9 347.5L1023 348.9L1022.3 351L1020.7 350.6ZM1020.6 348.1L1022.1 347.6L1022.8 349.1L1022.1 351.2L1020.7 350.9Z"/><path fill="#505050" stroke="#505050" stroke-width=".5" stroke-linejoin="round" d="M1038.3 364.6L1039.3 365.7L1039 369.1L1038 372.6L1036.6 376L1035.2 379.4L1033.1 381.9L1031.4 380.8L1031.1 377.4L1032.1 373.9L1033.1 370.5L1035.9 368.4L1037.3 366.4Z"/><path fill="#c490e4" stroke="#c490e4" stroke-width=".5" stroke-linejoin="round" d="M984.7 301.7L985.4 305.2L983.3 307.2L980.6 308.6L978.5 310L977.1 312.7L975.1 315.5L972.3 318.2L970.9 320.3L969.2 320.3L969.2 318.9L970.3 317.2L971.6 314.8L973.7 312L975.8 310L976.5 307.9L978.5 305.2L980.6 303.1L982.7 302.1ZM1011.6 306.9L1015 306.9L1018.5 307.2L1021.2 307.6L1020.2 309.6L1020.9 311.4L1021.9 314.1L1024 318.2L1023.3 319.3L1012.6 319.3L1012.3 312.7ZM990.9 331L994.4 331.3L998.5 331L1001.9 331.3L1001.3 334.1L999.9 336.8L998.5 339.6L995.7 341.7L993.7 342.7L991.6 341L989.2 338.2L989.9 334.1ZM983.3 333.7L986.1 333.4L987.1 336.8L986.8 340.3L984.7 341.7L983 341L983.3 337.5ZM1009.7 367L1011.1 365L1011.8 363.6L1013.9 363.9L1015.9 362.9L1016.6 360.2L1018 359.1L1020.1 359.8L1022.1 361.5L1021.8 364.3L1020.4 366.4L1018.7 367L1017.3 368.4L1015.2 370.5L1013.9 371.5L1011.8 371.2L1009.7 369.8ZM1003.2 384.9L1004.9 386.3L1006.3 384.6L1007.7 382.5L1010.4 381.2L1012.5 380.8L1013.9 379.4L1015.9 377.7L1018 377L1019.4 378.8L1019.7 381.5L1020.1 383.6L1018.7 386.3L1016.6 389.1L1013.9 391.1L1011.8 392.9L1009 393.2L1006.3 393.6L1004.6 391.8L1003.9 388.4Z"/><path fill="#505050" stroke="#505050" stroke-width=".5" stroke-linejoin="round" d="M1013.9 386.3L1015.2 385.8L1016.3 386.7L1015.2 387.8L1014 387.6ZM1028.7 283.4L1030.4 282.7L1031.8 280.6L1035.2 280.6L1038.7 279.9L1040 276.5L1044.2 274.7L1046.9 275.8L1050.4 276.8L1053.8 278.2L1057.2 279.9L1060.7 281.3L1063.8 282.1L1061 286.1L1060.3 289.6L1056.9 291.3L1053.5 292L1055.5 294.4L1058.1 297.8L1058.3 299.2L1056.2 300.6L1056.9 303.3L1054.1 306.1L1052.8 308.8L1049.3 309.9L1048.3 310.2L1046.2 306.8L1045.5 303.3L1043.5 299.9L1040.7 298.5L1037.3 300.6L1034.5 299.2L1036.6 298.5L1037.3 295.8L1035.2 293.7L1033.8 290.9L1034.5 287.5L1033.1 286.1L1031.1 287.5ZM1063.7 281.7L1066.8 280.1L1070.3 278L1072.3 277.3L1075.1 278.7L1079.2 279L1083.3 279.4L1086.8 279.4L1089 279.4L1093.1 282.3L1090.9 284.5L1088.9 286.6L1087.5 288.6L1084.7 290L1082.7 290.7L1079.2 289.3L1075.8 289.3L1073.7 287.2L1070.3 287.2L1068.9 285.2L1066.8 283.1ZM1024.5 299.5L1028.3 299.2L1029.4 297.1L1029.7 295.1L1028.3 293.7L1026.3 292L1029.7 292.7L1031.8 293.8L1033.1 295.1L1031.8 296.4L1030 297.3L1031.8 301.3L1033.8 304.7L1036.6 307.5L1034.5 309L1031.8 309.7L1028.3 306.9L1024.9 306.2L1025.9 303.3L1026.3 300.2ZM1031.6 326.5L1033.3 324.8L1035.7 325.5L1038.4 323.8L1042.6 321.7L1044 319.6L1044 316.2L1046 316.9L1048.1 318.2L1046.7 321L1044 324.4L1041.2 327.2L1037.8 329.3L1034.7 330.6L1033.1 330.6L1032.2 328.6Z"/><path fill="#c490e4" stroke="#c490e4" stroke-width=".5" stroke-linejoin="round" d="M978.4 292.3L980.1 291.8L983.5 291.5L987 291.3L986.6 288.9L984.9 286.8L982.9 285.1L982.5 284L984.9 283L987.7 282L989.1 280.6L991.1 279.2L992.5 277.5L993.9 276.8L994.6 275.8L994.2 274.7L994.9 273.7L996.1 273.8L996.8 275.4L996.5 276.6L997.7 275.1L997.2 273L996.3 269.6L995.6 265.4L996.1 270.6L994.4 271.9L992.3 272.6L990.9 271.3L990.2 268.5L991.6 266.4L994.4 264.7L996.1 261.6L998.2 258.5L1001.3 256.5L1004.7 255.4L1007.5 255.8L1010.9 256.8L1015 258.2L1017.1 259.6L1015.7 261.6L1017.8 260.6L1019.2 258.5L1021.9 257.5L1025.4 256.8L1028.8 256.1L1031.6 254.7L1032.6 252.3L1034.7 252.7L1035.7 255.1L1036.9 257.8L1038.1 255.1L1040.5 252L1042.6 248.9L1046 246.5L1049.5 245.4L1053.6 245.1L1056.2 244.6L1046.2 243.7L1050.3 245.1L1053.7 245.8L1056.5 246.8L1055.8 249.2L1059.9 248.5L1064.1 248L1066.8 248.2L1070.3 250L1073.7 250.6L1075.8 248.5L1080.6 248.2L1086.1 248.9L1090.9 249.6L1096.4 248.5L1101.3 248.2L1104.7 249.6L1108.1 251.3L1111.6 253.4L1114.3 254.7L1113.7 256.8L1113 259.6L1110.9 260.9L1111.6 262.3L1115 265.1L1117.1 269.2L1119.2 273.3L1117.8 272.8L1114.3 269.5L1111.6 266.1L1109.5 263.3L1108.1 260.6L1106.8 258.5L1105.4 257.6L1105.9 259.6L1104.7 262.3L1101.3 263.3L1097.8 264.4L1097.5 266.4L1097.8 269.9L1100.6 270.6L1104.7 271.3L1106.8 273.3L1108.1 276.1L1108.8 280.2L1109.2 283.7L1108.1 286.4L1106.2 287.2L1105.4 283L1104.7 280.2L1102.6 279.5L1099.9 278.8L1097.1 276.8L1094.4 274.7L1091.6 273.3L1089.5 273L1088.2 274L1089.5 276.8L1089 279.4L1086.8 279.4L1083.3 279.4L1079.2 279L1075.1 278.7L1072.3 277.3L1070.3 278L1066.8 280.1L1063.7 281.7L1062.7 281.9L1059.9 280.6L1056.5 279.2L1053 276.8L1050.3 275.7L1046.2 276.1L1044.2 274.7L1040 276.5L1038.7 279.9L1035.2 280.6L1031.8 280.6L1030.4 282.7L1028.7 283.4L1031.1 287.5L1032.1 292.3L1031.8 293.8L1029.7 292.7L1026.9 292L1028.3 293.7L1029.7 295.1L1029.4 297.1L1028.3 299.2L1024.9 299.5L1022.1 299.9L1018.7 300.2L1015.9 299.5L1013.2 298.5L1011.8 296.4L1010.8 295.1L1009.7 296.4L1009.4 299.2L1008.3 300.6L1007 298.5L1005.9 296.4L1005.6 295.1L1003.5 292.3L1001.5 290.2L999.4 289.2L998 289.6L998.7 291.6L1000.8 293.7L1002.8 295.8L1003.5 297.8L1001.5 299.5L1000.1 298.5L1001.5 296.4L999.4 294.4L997.3 292.3L995.3 290.9L994.6 289.6L991.8 291.6L989.7 292.3L988.4 295.1L987 297.8L985.6 299.9L982.9 300.9L980.1 300.6L979.4 297.8L978 295.1Z"/><path fill="#333333" stroke="#333333" stroke-width=".5" stroke-linejoin="round" d="M1013.5 289.6L1015.2 288.5L1018 289.2L1019.4 288L1020.7 288.9L1023.5 290.2L1026.3 291.6L1028.3 292.4L1027.6 293.3L1023.5 293L1019.4 293L1015.9 293.3L1013.9 292.3L1013.2 290.9ZM1031.2 287.5L1033.1 286.2L1034.4 287.5L1033.7 290.9L1035.1 293.7L1037.1 295.8L1036.4 298.5L1034.5 297.8L1033.1 295.1L1032.1 292.3L1031.2 289.6ZM1001.5 266.8L1002.7 264.1L1004.3 263.4L1004.1 265.2L1002.8 267.9L1002.3 270.5L1003 272.6L1001.9 273.3L1001.2 270.5ZM1000.8 273L1003.5 272.3L1004.9 270.4L1007 269.3L1009.4 269.4L1009 270.3L1006.6 270.6L1005.9 272.3L1005.6 274.7L1003.5 275.4L1000.8 275.8L998.7 276.8L997.3 275.8L998.7 274.7L1000.1 274.1ZM1011.6 261.6L1014.3 261.3L1015.7 262.7L1014.7 264.4L1012.3 264Z"/><path fill="#c490e4" stroke="#c490e4" stroke-width=".5" stroke-linejoin="round" d="M968.2 262.3L970.9 261.6L974.4 261.3L976.1 262.7L975.8 264.4L973.7 265.4L970.9 265.8L969.2 264.4ZM992.3 244.4L995.7 243.7L999.2 243L1001.9 243.4L1000.6 245.1L998.5 245.8L997.1 248.2L995.4 247.2L993.7 245.8Z"/><path fill="#5b5362" stroke="#5b5362" stroke-width=".5" stroke-linejoin="round" d="M1012.3 242.3L1015 242L1017.8 241.6L1021.2 242.3L1020.5 243.4L1015 243.4Z"/><path fill="#c490e4" stroke="#c490e4" stroke-width=".5" stroke-linejoin="round" d="M1021.9 249.2L1024 247.8L1028.8 246.8L1028.5 248.2L1025.4 249.2L1024 251.3L1024.3 254L1026 255.4L1023.3 255.1L1021.6 252.7ZM1037.8 240.6L1040.5 241.3L1044.6 242.7L1047.4 243.7L1045.3 244.4L1041.2 243.4L1037.8 242.3ZM1068.5 244.4L1071.6 244.1L1075.8 244.4L1076.1 245.6L1072.3 246.1L1068.9 245.6ZM1106.8 273.3L1108.1 275L1110.2 277.8L1113 281L1112.4 281.5L1109.5 278.5L1107.5 275.7ZM990.2 268.5L991.6 266.4L994.4 264.7L996.1 261.6L998.2 258.5L1001.3 256.5L1004.7 255.4L1008.1 256.1L1006.1 257.5L1003.3 258.2L1000.6 259.2L998.5 261.6L997.5 264.4L996.4 267.1L996.1 270.6L994.4 271.9L992.3 272.6L990.9 271.3ZM993.3 274.3L995.3 273.4L996.6 274.7L996.4 276.7L994.3 276.8ZM977.7 277.8L980.1 276.5L981.5 277.8L980.8 280.3L978 280.9ZM981.5 272.3L983.5 271.6L984.2 274.4L985.6 276.5L987 279.2L987.7 281.3L985.6 282.3L982.9 282.7L982.2 281.3L983.9 279.9L982.9 277.8L981.8 275.8ZM977.7 293L979.4 293.3L979.8 297.8L978.7 299.9L977.7 297.8ZM1008.3 275.4L1011.8 275.1L1013.9 277.8L1013.2 280.6L1009.7 280.9L1007.3 280.3L1007.7 277.5ZM1005.6 270.3L1009 270.1L1009 272.3L1005.9 272.5Z"/><path fill="#505050" stroke="#505050" stroke-width=".5" stroke-linejoin="round" d="M1005.6 272.5L1009 272.3L1008.7 275.1L1005.9 275.1Z"/><path fill="#c490e4" stroke="#c490e4" stroke-width=".5" stroke-linejoin="round" d="M1001.5 284L1005.6 283.9L1005.9 285.6L1001.8 285.8ZM1001.5 285.8L1005.9 285.6L1005.6 287.6L1001.8 287.8ZM1001.5 289.6L1003.5 289.6L1003.9 291.6L1001.8 292ZM1003.9 288.2L1006.6 288.2L1007.3 292.3L1004.9 292.7ZM1006.3 286.1L1009.7 285.8L1012.5 287.5L1012.5 290.2L1011.8 293L1009.7 294.4L1007.7 293L1007 290.2L1006.3 288.2ZM1005.6 295.1L1008.3 295.1L1009.7 296.4L1009.4 299.2L1008.3 300.6L1007 298.5L1005.9 296.4ZM1009.7 301.3L1011.4 301.4L1011.3 302.6L1009.9 302.5ZM998.7 298.9L1001.5 298.5L1001.3 300.4L999.4 300.6ZM994.2 294.7L995.8 294.4L996.1 297.5L994.6 297.8ZM994.9 292.3L995.8 292.3L995.8 293.8L995 293.8ZM988.7 296.1L990.1 295.9L990.1 296.8L988.8 296.9Z"/><path fill="#454545" stroke="#454545" stroke-width=".5" stroke-linejoin="round" d="M1018.7 301.6L1020.4 301.3L1020.2 302.3L1018.8 302.5Z"/><path fill="#c490e4" stroke="#c490e4" stroke-width=".5" stroke-linejoin="round" d="M1022.1 300.2L1026.3 300.2L1025.6 303.3L1023.5 306.8L1022.1 308.1L1021.8 304.7ZM1022.7 306.9L1025.4 305.8L1028.8 307.9L1032.9 310L1035.7 309.3L1037.8 312L1039.8 314.8L1041.9 315.5L1044 316.2L1044 319.6L1042.6 321.7L1038.4 323.8L1035.7 325.5L1033.3 324.8L1031.6 326.5L1030 323.6L1028.3 320.3L1026.3 316.9L1024.3 313.4L1023 310.7ZM1029.7 297.1L1031.8 296.4L1034.5 299.2L1037.3 300.6L1040.7 298.5L1043.5 299.9L1045.5 303.3L1046.2 306.8L1048.3 310.2L1050.4 312.3L1049 314.3L1045.5 313.7L1042.8 312.3L1039.3 310.2L1036.6 307.5L1033.8 304.7L1031.8 301.3ZM1049.3 309.9L1052.8 308.8L1054.1 306.1L1056.9 303.3L1056.2 300.6L1058.3 298.9L1061.5 300.6L1060.1 303.3L1060.8 306.8L1058.8 310.2L1057.4 312.3L1058.8 315L1055.9 315.7L1053.1 314.3L1050.4 314.5L1049 314.3L1050.4 312.3ZM1062.7 281.9L1063.7 281.7L1066.8 283.1L1068.9 285.2L1070.3 287.2L1073.7 287.2L1075.8 289.3L1079.2 289.3L1082.7 290.7L1084.7 290L1087.5 288.6L1088.9 286.6L1090.9 284.5L1093.1 282.3L1089 279.4L1089.5 276.8L1088.2 274L1089.5 273L1091.6 273.3L1094.4 274.7L1097.1 276.8L1099.9 278.8L1102.6 279.5L1104.7 280.2L1105.4 283L1106.2 287.2L1104.7 287.9L1102.6 290.5L1100.6 290L1098.5 292.1L1099.2 293.4L1101.3 294.1L1103.3 294.8L1102.3 296.9L1103.3 299L1104.7 301L1106.1 303.1L1107.5 305.8L1107.8 308.6L1107.1 312L1105.4 314.8L1102.6 316.9L1100.6 318.2L1097.8 317.6L1095.7 316.2L1093 316.2L1091.6 316.9L1090.2 317.6L1088.2 315.5L1086.8 312.7L1085.4 309.3L1084 310L1082.3 312L1082.7 314.8L1081.3 317.2L1079.2 316.9L1077.1 318.2L1075.1 321.7L1073 325.1L1070.9 328.6L1070.9 332L1069.9 335.5L1068.5 337.2L1066.8 334.1L1065.1 329.9L1063.4 325.8L1062 322.4L1059.9 319.6L1057.2 316.9L1058.5 315.5L1057.9 312L1059.2 310.7L1061 307.2L1060.6 303.8L1062 301L1060.6 299L1057.9 296.9L1055.1 294.1L1053 291.4L1053.7 291.4L1056.5 290.5L1061 290.5L1060.6 288.5L1061 286.4Z"/><path fill="#505050" stroke="#505050" stroke-width=".5" stroke-linejoin="round" d="M1066.8 307.9L1068.9 307.2L1071.6 308.9L1075.1 310.3L1078.5 310.7L1078.5 311.7L1075.1 312L1071.6 310.7L1068.2 309.6ZM1082.7 314.8L1082.3 312L1084 310L1085.4 309.3L1086.8 312.7L1088.2 315.5L1090.2 317.6L1090.9 319.6L1088.9 320.3L1087.5 322.4L1086.8 325.8L1085.8 326.5L1084.7 323.1L1083.3 320.3L1082 317.6ZM1090.2 317.6L1091.6 316.9L1093 318.2L1095.1 321L1097.1 324.4L1098.5 328.6L1099.2 330.6L1097.1 332.7L1095.1 331.3L1094.4 328.6L1096.8 327.2L1097.1 324.4L1093.7 322.4L1090.9 320Z"/><path fill="#c490e4" stroke="#c490e4" stroke-width=".5" stroke-linejoin="round" d="M1088.9 320.3L1090.9 320L1093.7 322.4L1097.1 324.4L1096.8 327.2L1094.4 328.6L1093.7 330.6L1091.6 330.6L1091.3 334.1L1092 336.8L1094.4 340.3L1097.1 344.4L1097.5 347.2L1095.7 345.8L1093.7 342.3L1090.9 338.2L1090.2 334.8L1090.6 330.6L1090.2 328.6L1089.9 325.8L1088.2 323.8L1087.5 322.4ZM1092 316.9L1094.4 316.2L1096.8 317.6L1096.4 320.3L1097.8 323.1L1099.9 325.8L1101.3 328.6L1101.6 331.3L1099.9 334.1L1097.8 335.8L1097.1 334.1L1099.2 331.3L1099.2 328.6L1097.8 325.8L1095.7 322.4L1094.4 319.6L1093 318.2ZM1099.2 320.3L1100.9 320L1100.9 322L1099.5 322.4ZM1109.2 312L1110.6 312.4L1110.6 315.5L1109.5 315.8Z"/><path fill="#505050" stroke="#505050" stroke-width=".5" stroke-linejoin="round" d="M1104.7 290L1106.8 289.3L1108.5 291.4L1107.1 293.1L1105.4 292.1Z"/><path fill="#c490e4" stroke="#c490e4" stroke-width=".5" stroke-linejoin="round" d="M1106.8 292.8L1108.8 294.1L1110.9 296.9L1110.2 298.6L1108.1 297.6L1107.1 295.2ZM1117.8 290L1119.9 292.1L1121.2 295.5L1119.9 297.6L1117.1 299L1115.7 302.4L1114.3 301.7L1113.3 299.6L1114.3 297.6L1117.1 296.2L1118.5 294.1ZM1114 283L1115.7 282.6L1118.1 285L1117.1 287.1L1115 286.4ZM1115.7 288.5L1117.8 289.2L1120.2 292.6L1120.9 294.3L1118.5 294.3L1117.1 291.2ZM1112.3 300.3L1114 300.3L1114 302.7L1112.6 302.7ZM1111.6 321.7L1113.7 321.3L1114.3 324.4L1113.3 327.2L1114.3 329.3L1113 329.9L1111.9 326.5ZM1115 328.6L1117.8 329.3L1119.2 332L1118.5 334.1L1120.2 334.8L1120.9 337.5L1119.2 339.6L1116.4 338.2L1116.4 336.1L1115 333.4L1114.3 330.6ZM1110.1 335.6L1113.1 332.6L1113.5 333L1110.5 336Z"/><path fill="#505050" stroke="#505050" stroke-width=".5" stroke-linejoin="round" d="M1071.3 335.5L1072.7 336.8L1072.7 339.2L1071.3 339.2Z"/><path fill="#c490e4" stroke="#c490e4" stroke-width=".5" stroke-linejoin="round" d="M1087.8 341L1090.2 341.3L1093 344.4L1095.7 348.5L1097.8 352L1099.5 354L1099.2 356.7L1097.5 356L1095.4 353.3L1093.3 349.8L1091.3 347.1L1089.5 344.4ZM1098.5 357.1L1101.6 357.7L1105.7 358.8L1109.9 360.5L1109.2 361.5L1104.4 360.5L1100.2 358.8ZM1112.6 361.2L1114.7 360.8L1116.8 361.5L1118.8 361.5L1118.1 362.6L1114 362.6Z"/><path fill="#454545" stroke="#454545" stroke-width=".5" stroke-linejoin="round" d="M1116.8 359.8L1120.2 359.1L1120.9 360.2L1117.5 361.2Z"/><path fill="#c490e4" stroke="#c490e4" stroke-width=".5" stroke-linejoin="round" d="M1102.6 346.5L1105.4 344.4L1108.1 341.7L1110.6 338.6L1113 340.3L1112.3 343.7L1111.6 347.2L1111.9 349.1L1110.6 351.9L1109.2 354L1106.4 352.6L1104.4 351.2L1104.4 347.8L1103 345ZM1113.3 348.4L1115.4 347.8L1116.8 349.8L1116.1 351.9L1117.1 355.3L1115.4 356L1114.4 353.3L1113.3 356L1113 352.6L1113.7 350.5ZM1120.9 351.9L1123 351.5L1125 352.6L1124.7 353.8L1121.6 353.6ZM1125.7 348.4L1128.5 349.1L1130.5 351.2L1132.6 350.9L1136 351.9L1136.4 361.5L1134.7 361.2L1133.3 358.8L1132.6 360.2L1131.9 357.4L1129.9 354.6L1127.8 352.6L1125.7 350.5Z"/><path fill="#505050" stroke="#505050" stroke-width=".5" stroke-linejoin="round" d="M1136.4 351.9L1138.8 352.9L1140.9 354.6L1142.2 356.7L1141.6 358.8L1143.6 362.2L1145 363.9L1142.9 363.3L1140.9 360.8L1139.5 358.8L1137.4 360.8L1136.4 361.5Z"/><path fill="#454545" stroke="#454545" stroke-width=".5" stroke-linejoin="round" d="M1144.7 356.7L1147.1 355.3L1149.1 354L1149.3 354.8L1147.4 356.4L1145.1 357.5Z"/><path fill="#c490e4" stroke="#c490e4" stroke-width=".5" stroke-linejoin="round" d="M1126.4 365.3L1128.1 366.4L1130.5 366.7L1129.2 369.1L1129.5 371.9L1131.9 373.9L1134 372.6L1135.4 369.1L1136 365.7L1136.7 364.3L1137.4 367L1138.1 371.2L1138.8 375.3L1139.5 379.4L1140.5 382.9L1140.9 386.3L1139.8 389.8L1138.8 393.2L1136.7 396.7L1134 399.4L1131.2 402.2L1128.5 404.2L1125.7 405.3L1123 405.6L1120.2 404.2L1119.5 402.2L1120.9 400.1L1118.1 400.8L1119.5 398L1117.5 397.3L1116.8 395.3L1114.7 394.2L1111.3 394.6L1107.8 396L1104.4 397L1100.9 397.7L1098.9 396.7L1100.2 393.9L1101.3 390.5L1100.9 387L1102 383.6L1103 380.1L1105.7 378.8L1109.2 377.4L1111.9 376L1113.3 373.9L1115.4 372.6L1116.8 370.5L1119.5 369.1L1122.3 368.8L1123.3 367L1125 365.7ZM1120.3 408.6L1122.4 408.9L1122.1 410.7L1120.6 411.7L1119.1 411.3ZM1132.5 418.4L1134 417L1137.4 415.5L1140.9 413.8L1143.5 412.1L1143.8 413.1L1141.6 414.5L1138.1 416.3L1134.7 419.2L1133.2 419.6ZM1145.6 412.2L1147.8 410L1149.7 407.4L1150.4 404.3L1151.3 404.7L1151.1 407.7L1150.9 409.2L1149.1 410.9L1146.5 412.7Z"/></svg>
</article>
<article class="tile" style="left:824px;top:496px;width:352px;height:352px">
<h3 class="t tt" style="left:24px;top:21px;font-size:13px;transform:translateX(0.93px) scaleX(0.9569);">Services</h3>
<i class="r" style="left:84.3px;top:32px;width:242.9px;height:1px;background:#4a4a4a;"></i>
<span class="t nm" style="left:23px;top:47px;font-size:21.5px;clip-path:polygon(-2px -2px,calc(100% + 2px) -2px,calc(100% + 2px) calc(100% + 2px),12.27px calc(100% + 2px),12.27px 12.7px,8.11px 12.7px,8.11px calc(100% + 2px),4.67px calc(100% + 2px),4.67px 12.7px,-0.3px 12.7px,-0.3px calc(100% + 2px),-2px calc(100% + 2px));transform:translateX(0.67px) scaleX(1.0410);">104</span>
<span class="t" style="left:25px;top:72px;font-size:13px;color:#8c8c8c;transform:translateX(0.36px) scaleX(0.9764);">Web</span>
<span class="t nm" style="left:126px;top:47px;font-size:21.5px;clip-path:polygon(-2px -2px,calc(100% + 2px) -2px,calc(100% + 2px) calc(100% + 2px),12.27px calc(100% + 2px),12.27px 12.7px,8.11px 12.7px,8.11px calc(100% + 2px),4.67px calc(100% + 2px),4.67px 12.7px,-0.3px 12.7px,-0.3px calc(100% + 2px),-2px calc(100% + 2px));transform:translateX(0.41px) scaleX(1.1235);">1</span>
<span class="t" style="left:127px;top:72px;font-size:13px;color:#8c8c8c;transform:translateX(0.24px) scaleX(0.9887);">Messaging</span>
<span class="t nm" style="left:230px;top:47px;font-size:21.5px;transform:translateX(0.92px) scaleX(1.0707);">6</span>
<span class="t" style="left:230px;top:72px;font-size:13px;color:#8c8c8c;transform:translateX(0.48px) scaleX(0.9965);">RMI/Custom</span>
<i class="r" style="left:122px;top:40.3px;width:0px;height:46.3px;background:none;border-left:1px dotted #666;"></i>
<i class="r" style="left:224.2px;top:40.3px;width:0px;height:46.3px;background:none;border-left:1px dotted #666;"></i>
<svg class="g" style="left:24px;top:114px;" width="305" height="110" viewBox="848 610 305 110"><g fill="#5a75c8"><rect x="856.74" y="621.3" width="11.4" height="95.5"/><rect x="876.69" y="621.3" width="11.4" height="95.5"/><rect x="895.45" y="622.5" width="11.4" height="94.3"/><rect x="915.4" y="614.2" width="11.4" height="102.6"/><rect x="935.35" y="619" width="11.4" height="97.8"/><rect x="955.3" y="621.3" width="11.4" height="95.5"/><rect x="975.25" y="622.5" width="11.4" height="94.3"/><rect x="994.01" y="621.3" width="11.4" height="95.5"/><rect x="1013.96" y="622.5" width="11.4" height="94.3"/><rect x="1033.68" y="622.5" width="11.4" height="94.3"/><rect x="1053.63" y="622.5" width="11.4" height="94.3"/><rect x="1073.58" y="621.3" width="11.4" height="95.5"/><rect x="1093.53" y="622.5" width="11.4" height="94.3"/><rect x="1112.29" y="622.5" width="11.4" height="94.3"/><rect x="1132.24" y="626.1" width="11.4" height="90.7"/></g><rect x="849.5" y="716.2" width="300.8" height="1" fill="#5a5a5a"/></svg>
<span class="t tt" style="left:54px;top:232px;font-size:14px;transform:translateX(0.43px) scaleX(0.9673);">18. Jul</span>
<span class="t tt" style="left:133px;top:232px;font-size:14px;transform:translateX(0.14px) scaleX(0.9703);">20. Jul</span>
<span class="t tt" style="left:211px;top:232px;font-size:14px;transform:translateX(0.93px) scaleX(0.9643);">22. Jul</span>
<span class="t tt" style="left:286px;top:232px;font-size:14px;transform:translateX(0.6px) scaleX(0.9661);">24. Jul</span>
<svg class="g" style="left:26px;top:268.9px;" width="10" height="9" viewBox="850 764.9 10 9"><rect x="850.7" y="768.3" width="1.9" height="5" fill="#b9a7e8"/><rect x="854.1" y="765.3" width="1.9" height="8" fill="#c9d0f2"/><rect x="857.5" y="766.9" width="1.9" height="6.4" fill="#9fb0e8"/></svg>
<span class="t" style="left:41px;top:269px;font-size:13px;color:#8c8c8c;transform:translateX(0.07px) scaleX(1.0230);">Monitored requests</span>
<span class="t nm" style="left:264px;top:267px;font-size:15px;">22.3</span>
<span class="t" style="left:294px;top:269px;font-size:13px;color:#8c8c8c;transform:translateX(0.05px) scaleX(1.0887);">k/min</span>
<svg class="g" style="left:26px;top:292.6px;" width="10" height="9" viewBox="850 788.6 10 9"><rect x="850.7" y="792" width="1.9" height="5" fill="#4fa8f0"/><rect x="854.1" y="789" width="1.9" height="8" fill="#7cc4f5"/><rect x="857.5" y="790.6" width="1.9" height="6.4" fill="#4fa8f0"/></svg>
<span class="t" style="left:41px;top:293px;font-size:13px;color:#8c8c8c;transform:translateX(0.32px) scaleX(1.0088);">Calls to Internet</span>
<span class="t nm" style="left:292px;top:291px;font-size:15px;transform:translateX(0.78px) scaleX(0.9241);">5</span>
<span class="t" style="left:301px;top:293px;font-size:13px;color:#8c8c8c;transform:translateX(0.94px) scaleX(1.0454);">/min</span>
<svg class="g" style="left:26px;top:316px;" width="10" height="9" viewBox="850 812 10 9"><rect x="850.7" y="815.4" width="1.9" height="5" fill="#5b78d0"/><rect x="854.1" y="812.4" width="1.9" height="8" fill="#5b78d0"/><rect x="857.5" y="814" width="1.9" height="6.4" fill="#5b78d0"/></svg>
<span class="t" style="left:41px;top:316px;font-size:13px;color:#8c8c8c;transform:translateX(0.29px) scaleX(1.0061);">Calls to unmonitored hosts</span>
<span class="t nm" style="left:291px;top:314px;font-size:15px;transform:translateX(0.28px) scaleX(1.1107);">0</span>
<span class="t" style="left:301px;top:316px;font-size:13px;color:#8c8c8c;transform:translateX(0.94px) scaleX(1.0454);">/min</span>
</article>
</section>
<section>
<h2 style="left:1222px;top:81px;transform:translateX(0.12px) scaleX(0.8982)">User experience</h2>
<article class="tile" style="left:1223px;top:120px;width:352px;height:352px">
<h3 class="t tt" style="left:25px;top:21px;font-size:13px;transform:translateX(0.38px) scaleX(1.0070);">Apdex</h3>
<i class="r" style="left:74px;top:32px;width:253.2px;height:1px;background:#4a4a4a;"></i>
<span class="t st" style="left:25px;top:44px;font-size:13px;transform:translateX(0.46px) scaleX(1.2102);">www.easytravel.com</span>
<svg class="g map" style="left:23.9px;top:112px" width="310" height="200" viewBox="1246.8 232 310 200" role="img" aria-label="World map"><path fill="#505050" stroke="#505050" stroke-width=".5" stroke-linejoin="round" d="M1352.6 241L1358.8 239.9L1365.7 239.2L1371.2 239.2L1373.9 241L1378.8 241.3L1375.3 243.7L1373.2 246.5L1372.6 249.2L1371.2 252L1369.1 254L1368.4 256.1L1365.7 257.5L1362.2 259.6L1358.8 261.6L1355.3 264.4L1352.6 267.1L1350.5 269.5L1349.1 269.5L1347.1 267.8L1346 264.4L1346.4 260.9L1347.8 258.2L1347.4 254.7L1348.1 251.3L1347.8 248.5L1345 247.2L1342.9 246.8L1343.6 244.4L1347.1 242.3Z"/><path fill="#ffdc19" stroke="#ffdc19" stroke-width=".5" stroke-linejoin="round" d="M1291.1 251.6L1289.1 250L1286.3 248.5L1284.6 248.4L1282.2 249.1L1279.4 249.4L1276.7 250L1274.6 250.9L1273.8 252.7L1272.2 252.9L1270.5 252.3L1269.2 251.6L1269.1 248.9L1267 249.1L1265 250.5L1263 252L1263 253.4L1264.6 253.9L1263.5 255.8L1263.7 256.8L1266.4 256.1L1268.8 255.1L1269.8 256.1L1268.4 257.5L1265 258.5L1262.2 259.2L1260.8 260.2L1261.5 262.3L1263.3 263L1265.7 262.7L1263.6 264L1260.2 265.4L1256.7 266.1L1254 267.1L1252.9 267.8L1255.3 267.5L1258.8 266.6L1262.2 265.8L1265.7 264.7L1268.1 263L1270.5 262L1273.2 261.6L1275.3 262.7L1276.3 263.7L1277 266.4L1277.4 269.5L1278.4 270.6L1279.4 269.2L1279.8 266.4L1278.8 264.4L1277.4 262.3ZM1249.8 268L1250.9 267.8L1250.9 268.6L1249.8 268.6Z"/><path fill="#6fd095" stroke="#6fd095" stroke-width=".5" stroke-linejoin="round" d="M1291.1 251.6L1294.6 252.3L1300.1 252.5L1303.2 253.4L1304.9 255.1L1307 256.1L1309.7 255.8L1312.8 256.5L1314.6 255.4L1317.3 255.8L1319.4 257.5L1321.5 258.2L1322.8 259.6L1322.1 261.6L1323.5 263L1325.6 262.3L1325.2 264.4L1324.2 265.8L1325.6 265.1L1328.3 265.8L1329.7 267.8L1331.1 269.9L1333.2 269.2L1334.5 271.9L1335.9 274.7L1337.3 277.5L1335.2 279.5L1333.9 281.6L1331.1 283L1327.7 284.3L1324.9 285L1323.5 285.7L1320.8 286.8L1317.3 287.4L1313.9 288.1L1311.1 289.2L1309.1 290.5L1308 289.5L1309.4 287.1L1308.4 285L1307 283.7L1305.6 284L1303.5 282.6L1300.1 281.5L1293.2 280.9L1286.3 280.2L1279.4 279.5L1275.3 279.5L1275.7 276.8L1276.3 274L1277.4 271.3L1278.4 270.6L1279.4 269.2L1279.8 266.4L1278.8 264.4L1277.4 262.3Z"/><path fill="#333333" stroke="#333333" stroke-width=".5" stroke-linejoin="round" d="M1310.1 267.8L1311.1 265.8L1313.9 264L1316.6 263L1320.1 263.3L1322.8 264.4L1324.2 265.8L1322.1 269.2L1321.5 271.9L1319.4 273.3L1318 274L1317.3 276.8L1316.6 278.8L1315.3 278.8L1315.6 276.1L1315.9 274.4L1313.9 273.3L1311.8 271.3L1310.1 269.2Z"/><path fill="#6fd095" stroke="#6fd095" stroke-width=".5" stroke-linejoin="round" d="M1303.5 250.6L1307 248.2L1310.4 247.5L1313.9 249.2L1316.6 249.9L1318 252L1315.9 254L1313.2 254.7L1310.4 255.4L1307 254.7L1304.9 252.7ZM1312.2 245.1L1315.3 244.1L1318.7 244.4L1321.5 243.4L1320.8 245.8L1318 246.8L1314.6 247.5ZM1326.3 252L1329.7 251.3L1333.2 252L1335.9 254.7L1338 258.2L1340.1 260.2L1338 262.3L1335.2 263L1333.2 265.8L1331.1 264.4L1331.8 261.6L1329 259.6L1327.7 256.1L1325.6 254ZM1331.1 242.3L1336.6 240.3L1342.8 239.6L1351.8 238.9L1348.3 241L1343.5 243L1340.1 245.1L1336.6 246.5L1333.2 247.2L1330.4 245.8L1331.8 243.7ZM1322.1 246.5L1326.3 245.8L1329 247.8L1327.7 249.9L1324.2 250.6L1321.5 249.2ZM1319.4 252L1322.8 251.3L1324.9 253.4L1323.5 256.1L1320.8 255.4ZM1324.9 243L1327.7 242.3L1329.7 243.7L1327.7 245.1L1325.2 244.7ZM1324.2 287.1L1327 285.7L1329.7 285L1330.8 286.4L1328.3 287.8L1325.6 289.5L1324.2 289.2ZM1333.2 281.6L1335.2 281.2L1337.3 283.7L1337 286.4L1334.5 286.1L1332.5 284.3Z"/><path fill="#ffdc19" stroke="#ffdc19" stroke-width=".5" stroke-linejoin="round" d="M1275.3 279.5L1279.4 279.5L1286.3 280.2L1293.2 280.9L1300.1 281.5L1303.5 282.6L1304.6 285L1303.5 288.5L1303.2 291.2L1304.9 289.2L1306.3 286.4L1307.3 287.8L1307 290.5L1309.1 290.5L1311.1 289.2L1313.9 288.1L1317.3 287.4L1320.8 286.8L1323.5 285.7L1323.9 287.1L1322.1 289.2L1320.1 290L1319.4 292.1L1315.9 293.4L1313.2 296.2L1311.1 299L1308.4 301.7L1305.6 304.5L1304.2 307.2L1304.4 310.7L1303.5 314.1L1302.2 311.4L1301.5 308.6L1300.1 307.6L1296.7 307.2L1293.2 307.6L1289.8 308.6L1287.7 310.7L1286.3 314.1L1285.3 317.6L1285.6 320.3L1287 322L1289.1 322.4L1291.1 321L1292.5 318.9L1294.6 318.2L1296 318.9L1295.3 321L1293.2 323.8L1291.8 324.4L1290.5 325.8L1289.1 327.9L1286.3 327.5L1283.6 326.5L1280.8 324.4L1278.1 321.7L1277 318.9L1276 314.1L1275.3 310.7L1274.6 306.5L1273.2 303.1L1272.6 304.8L1273.2 307.9L1272.9 310.7L1273.9 313.4L1273.2 315.8L1271.2 312.7L1269.8 309.3L1270.1 305.8L1269.5 301.7L1268.4 298.3L1268.1 294.1L1269.1 290L1272.6 283.1Z"/><path fill="#505050" stroke="#505050" stroke-width=".5" stroke-linejoin="round" d="M1289.1 327.9L1290.5 325.8L1291.8 324.4L1293.2 324.4L1293.2 327.2L1297.3 327.5L1298 329.9L1296.7 332L1296 333L1294.2 333.4L1292.5 330.6L1290.5 329.3Z"/><path fill="#27ad70" stroke="#27ad70" stroke-width=".5" stroke-linejoin="round" d="M1294.2 333.4L1296 333L1297.3 334.8L1296.3 335.8L1294.9 334.8Z"/><path fill="#dc172a" stroke="#dc172a" stroke-width=".5" stroke-linejoin="round" d="M1297.3 335.1L1299.4 336.8L1301.5 335.3L1303.5 335.8L1303.2 337.5L1300.1 338L1298 337.4Z"/><path fill="#454545" stroke="#454545" stroke-width=".5" stroke-linejoin="round" d="M1298.7 316.9L1301.5 316.5L1304.2 318.2L1307 320.3L1305.6 320.9L1302.9 319.3L1300.1 318.2ZM1309.1 321.8L1312.5 322L1313.2 323.4L1310.4 323.9Z"/><path fill="#505050" stroke="#505050" stroke-width=".5" stroke-linejoin="round" d="M1320.8 337.5L1323.5 339.6L1326.3 341L1328 342L1327.7 345.1L1324.9 345.4L1322.8 346.1L1321.1 344.4L1320.1 342.3ZM1312.9 362.6L1315.3 361.5L1316.7 363.6L1319.4 365L1321.5 367L1322.2 370.5L1324.6 371.9L1324.6 374.3L1321.5 375L1320.1 376.3L1318.7 378.1L1316.3 378.4L1314.9 376L1313.9 373.9L1312.5 372.6L1312.9 367.7ZM1327.7 387.4L1329.7 389.1L1332.8 391L1333.1 393.2L1331.1 394.7L1329.1 394.4L1327.5 392.5L1327.1 389.8Z"/><path fill="#dc172a" stroke="#dc172a" stroke-width=".5" stroke-linejoin="round" d="M1303.5 335.8L1305.6 334.1L1308.4 332L1310.1 331.3L1309.1 333.4L1308 335.5L1309.1 338.2L1311.1 339.6L1313.2 341L1312.8 343.7L1313.2 346.5L1311.8 345L1310.8 348.4L1310.5 351.9L1309.1 354.6L1307 356.7L1306.7 358.8L1308.4 360.8L1311.1 362.2L1313.2 362.9L1313.2 365.7L1312.9 369.1L1312.7 372.6L1311.8 372.7L1309.1 370.5L1306.3 368.4L1304.3 365.7L1302.5 362.2L1300.8 358.8L1299.4 356L1299.1 352.6L1299.4 348.4L1301.5 345L1300.1 347.9L1302.2 345.1L1302.9 341.7L1303.4 338.2Z"/><path fill="#27ad70" stroke="#27ad70" stroke-width=".5" stroke-linejoin="round" d="M1308 335.5L1308.4 334.1L1310.4 332.7L1312.2 332.4L1313.9 334.1L1317.3 334.8L1320.1 335.1L1321.5 336.8L1320.8 339.6L1320.1 342.3L1318 344.4L1316.6 346.5L1314.6 347.2L1313.9 344.4L1313.2 341L1311.1 339.6L1309.1 338.2Z"/><path fill="#ffdc19" stroke="#ffdc19" stroke-width=".5" stroke-linejoin="round" d="M1327.7 341L1329.4 340.6L1330.4 343L1329.2 345.2L1328 345.8L1327.3 343.7Z"/><path fill="#ee691b" stroke="#ee691b" stroke-width=".5" stroke-linejoin="round" d="M1313.2 346.5L1314.6 347.2L1316.6 346.5L1318 344.4L1320.1 342.7L1321.1 344.4L1322.8 346.1L1324.9 345.4L1327.7 345.1L1328 345.8L1329.2 345.2L1330.4 343.4L1332.5 347.2L1333.9 349.1L1337.3 350.5L1340.8 351.5L1343.5 352.2L1346.3 354L1348.3 356L1348.7 358.8L1347.7 361.5L1346.3 363.6L1344.9 365.7L1344.6 369.1L1344.2 372.6L1343.5 375.3L1342.1 377.4L1340.1 378.8L1338 380.1L1335.9 382.2L1336.3 385.6L1335.3 387.7L1333.9 389.8L1332.8 391L1329.7 389.1L1327.7 387.4L1329.4 385.6L1329.7 382.9L1329.7 380.8L1328.4 378.8L1326.3 377.4L1324.9 375.3L1324.6 374.3L1324.6 371.9L1322.2 370.5L1321.5 367L1319.4 365L1316.7 363.6L1315.3 361.5L1313.2 362.9L1311.1 362.2L1308.4 360.8L1306.7 358.8L1307 356.7L1309.1 354.6L1310.5 351.9L1310.8 348.4L1311.8 345Z"/><path fill="#27ad70" stroke="#27ad70" stroke-width=".5" stroke-linejoin="round" d="M1320.8 374.6L1322.9 373.9L1324.9 375.3L1326.3 377.4L1328.4 378.8L1329.7 380.8L1329.7 382.9L1328.4 384.8L1326.6 384.8L1326.3 382.2L1324.2 380.1L1322.2 378.1L1320.8 376.7Z"/><path fill="#ee691b" stroke="#ee691b" stroke-width=".5" stroke-linejoin="round" d="M1311.8 372.7L1312.5 373.9L1313.1 378.1L1313.4 383.6L1313.2 385L1313.6 389.1L1314.2 394L1314.6 398.8L1315.6 403.6L1316.7 408.4L1318 412.6L1320.1 416L1322.2 418.8L1324.9 420.8L1327 421.9L1329.7 422L1327 421L1324.2 419.1L1322.2 416.7L1320.4 413.6L1319.4 409.8L1318.4 405.7L1317.3 401.5L1316.7 396L1316 390.5L1315.6 385L1316 382.2L1316.3 378.2L1314.9 376L1313.9 373.9L1312.7 372.6Z"/><path fill="#dc172a" stroke="#dc172a" stroke-width=".5" stroke-linejoin="round" d="M1315.6 378.2L1318.7 377.9L1320.1 376.3L1320.8 376.7L1322.2 378.1L1324.2 380.1L1326.3 382.5L1326.6 384.8L1328.4 384.9L1329.4 385.6L1327.7 387.4L1327.1 389.8L1327.5 392.5L1329.1 394.6L1330.4 397.3L1329.1 399.4L1327 400.1L1326.3 402.2L1325.3 405L1324.9 408.4L1325.6 411.9L1324.9 415.3L1324.2 417.4L1325.6 419.4L1327 420.8L1329.7 421.9L1327 421.5L1324.2 419.4L1321.8 416.8L1320 413.6L1318.7 409.8L1317.7 405.7L1316.7 401.5L1316 396L1315.3 390.5L1314.9 385L1315.1 382.2Z"/><path fill="#454545" stroke="#454545" stroke-width=".5" stroke-linejoin="round" d="M1332.2 417L1333.9 416.1L1334.9 416.5L1333.5 417.7Z"/><path fill="#505050" stroke="#505050" stroke-width=".5" stroke-linejoin="round" d="M1383.6 301.7L1386.3 300.7L1389.8 300L1393.2 299.6L1396 300.3L1396.7 303.1L1398.7 304.5L1401.5 305.8L1403.5 307.9L1405.6 306.5L1407 305.2L1409.7 306.2L1411.1 306.9L1413.9 306.9L1417.3 307.2L1420.1 307.6L1419.3 309.6L1419.7 311.4L1420.8 314.1L1422.5 317.6L1424.2 321L1426.3 324.4L1428 327.5L1429.7 331L1431.4 332.2L1433.9 332.2L1438 331.2L1441.4 330.3L1441.1 332L1439.4 335.5L1437.3 338.9L1434.5 343.7L1431.8 348.5L1429.7 352L1431.3 347.8L1429.2 350.5L1427.2 354L1426.5 357.4L1427.2 360.8L1427.9 364.3L1428.2 367.7L1426.5 370.5L1423.7 372.6L1421.7 374.6L1421.7 377.4L1421 380.1L1418.9 381.5L1418.6 384.3L1416.8 387.7L1414.1 390.5L1411.3 392.5L1408.6 393.2L1405.1 393.6L1403.1 391.8L1402.4 387.7L1401.7 384.9L1400.7 381.5L1399.6 377.4L1398.2 373.9L1397.6 371.2L1398.2 367L1398.9 362.9L1398.6 358.8L1397.6 355.3L1396.2 351.9L1395.1 349.1L1395.1 345L1395.6 347.2L1396 344.4L1394.6 342.3L1391.8 342.7L1389.8 341L1386.3 341.3L1381.5 342L1378.1 342.7L1375.3 341.7L1373.2 339.6L1371.2 336.8L1369.1 334.1L1367.7 331.3L1367 329.3L1367.4 326.5L1367.7 323.1L1368.1 320.3L1368.1 318.9L1369.1 317.2L1370.5 314.8L1372.6 312L1374.6 310L1375.3 307.9L1377.4 305.2L1379.4 303.1L1381.5 302.1Z"/><path fill="#333333" stroke="#333333" stroke-width=".5" stroke-linejoin="round" d="M1419.3 348.2L1420.8 347.5L1421.8 348.9L1421.1 351L1419.5 350.6ZM1419.5 348.1L1421 347.6L1421.7 349.1L1421 351.2L1419.6 350.9Z"/><path fill="#505050" stroke="#505050" stroke-width=".5" stroke-linejoin="round" d="M1437.2 364.6L1438.2 365.7L1437.8 369.1L1436.8 372.6L1435.4 376L1434.1 379.4L1432 381.9L1430.3 380.8L1429.9 377.4L1431 373.9L1432 370.5L1434.7 368.4L1436.1 366.4Z"/><path fill="#dc172a" stroke="#dc172a" stroke-width=".5" stroke-linejoin="round" d="M1383.6 301.7L1384.3 305.2L1382.2 307.2L1379.4 308.6L1377.4 310L1376 312.7L1373.9 315.5L1371.2 318.2L1369.8 320.3L1368.1 320.3L1368.1 318.9L1369.1 317.2L1370.5 314.8L1372.6 312L1374.6 310L1375.3 307.9L1377.4 305.2L1379.4 303.1L1381.5 302.1ZM1410.4 306.9L1413.9 306.9L1417.3 307.2L1420.1 307.6L1419 309.6L1419.7 311.4L1420.8 314.1L1422.8 318.2L1422.1 319.3L1411.5 319.3L1411.1 312.7Z"/><path fill="#ee691b" stroke="#ee691b" stroke-width=".5" stroke-linejoin="round" d="M1389.8 331L1393.2 331.3L1397.3 331L1400.8 331.3L1400.1 334.1L1398.7 336.8L1397.3 339.6L1394.6 341.7L1392.5 342.7L1390.5 341L1388 338.2L1388.7 334.1Z"/><path fill="#dc172a" stroke="#dc172a" stroke-width=".5" stroke-linejoin="round" d="M1382.2 333.7L1384.9 333.4L1386 336.8L1385.6 340.3L1383.6 341.7L1381.9 341L1382.2 337.5ZM1408.6 367L1409.9 365L1410.6 363.6L1412.7 363.9L1414.8 362.9L1415.5 360.2L1416.8 359.1L1418.9 359.8L1421 361.5L1420.6 364.3L1419.2 366.4L1417.5 367L1416.1 368.4L1414.1 370.5L1412.7 371.5L1410.6 371.2L1408.6 369.8Z"/><path fill="#ee691b" stroke="#ee691b" stroke-width=".5" stroke-linejoin="round" d="M1402 384.9L1403.8 386.3L1405.1 384.6L1406.5 382.5L1409.3 381.2L1411.3 380.8L1412.7 379.4L1414.8 377.7L1416.8 377L1418.2 378.8L1418.6 381.5L1418.9 383.6L1417.5 386.3L1415.5 389.1L1412.7 391.1L1410.6 392.9L1407.9 393.2L1405.1 393.6L1403.4 391.8L1402.7 388.4Z"/><path fill="#505050" stroke="#505050" stroke-width=".5" stroke-linejoin="round" d="M1412.7 386.3L1414.1 385.8L1415.1 386.7L1414.1 387.8L1412.8 387.6ZM1427.5 283.4L1429.2 282.7L1430.6 280.6L1434.1 280.6L1437.5 279.9L1438.9 276.5L1443 274.7L1445.8 275.8L1449.2 276.8L1452.7 278.2L1456.1 279.9L1459.5 281.3L1462.6 282.1L1459.9 286.1L1459.2 289.6L1455.8 291.3L1452.3 292L1454.4 294.4L1456.9 297.8L1457.1 299.2L1455.1 300.6L1455.8 303.3L1453 306.1L1451.6 308.8L1448.2 309.9L1447.1 310.2L1445.1 306.8L1444.4 303.3L1442.3 299.9L1439.6 298.5L1436.1 300.6L1433.4 299.2L1435.4 298.5L1436.1 295.8L1434.1 293.7L1432.7 290.9L1433.4 287.5L1432 286.1L1429.9 287.5ZM1462.6 281.7L1465.7 280.1L1469.1 278L1471.2 277.3L1473.9 278.7L1478.1 279L1482.2 279.4L1485.6 279.4L1487.8 279.4L1492 282.3L1489.8 284.5L1487.7 286.6L1486.3 288.6L1483.6 290L1481.5 290.7L1478.1 289.3L1474.6 289.3L1472.6 287.2L1469.1 287.2L1467.7 285.2L1465.7 283.1ZM1423.4 299.5L1427.2 299.2L1428.2 297.1L1428.5 295.1L1427.2 293.7L1425.1 292L1428.5 292.7L1430.6 293.8L1432 295.1L1430.6 296.4L1428.9 297.3L1430.6 301.3L1432.7 304.7L1435.4 307.5L1433.4 309L1430.6 309.7L1427.2 306.9L1423.7 306.2L1424.8 303.3L1425.1 300.2ZM1430.4 326.5L1432.1 324.8L1434.5 325.5L1437.3 323.8L1441.4 321.7L1442.8 319.6L1442.8 316.2L1444.9 316.9L1446.9 318.2L1445.6 321L1442.8 324.4L1440.1 327.2L1436.6 329.3L1433.5 330.6L1431.9 330.6L1431.1 328.6Z"/><path fill="#ffdc19" stroke="#ffdc19" stroke-width=".5" stroke-linejoin="round" d="M1377.2 292.3L1379 291.8L1382.4 291.5L1385.8 291.3L1385.5 288.9L1383.8 286.8L1381.7 285.1L1381.4 284L1383.8 283L1386.5 282L1387.9 280.6L1390 279.2L1391.4 277.5L1392.7 276.8L1393.4 275.8L1393.1 274.7L1393.8 273.7L1394.9 273.8L1395.6 275.4L1395.3 276.6L1396.5 275.1L1396 273L1395.1 269.6L1394.5 265.4L1394.9 270.6L1393.2 271.9L1391.1 272.6L1389.8 271.3L1389.1 268.5L1390.5 266.4L1393.2 264.7L1394.9 261.6L1397 258.5L1400.1 256.5L1403.5 255.4L1406.3 255.8L1409.7 256.8L1413.9 258.2L1415.9 259.6L1414.6 261.6L1416.6 260.6L1418 258.5L1420.8 257.5L1424.2 256.8L1427.7 256.1L1430.4 254.7L1431.4 252.3L1433.5 252.7L1434.5 255.1L1435.8 257.8L1437 255.1L1439.4 252L1441.4 248.9L1444.9 246.5L1448.3 245.4L1452.5 245.1L1455 244.6L1445 243.7L1449.1 245.1L1452.6 245.8L1455.3 246.8L1454.6 249.2L1458.8 248.5L1462.9 248L1465.7 248.2L1469.1 250L1472.6 250.6L1474.6 248.5L1479.4 248.2L1484.9 248.9L1489.8 249.6L1495.3 248.5L1500.1 248.2L1503.5 249.6L1507 251.3L1510.4 253.4L1513.2 254.7L1512.5 256.8L1511.8 259.6L1509.7 260.9L1510.4 262.3L1513.9 265.1L1515.9 269.2L1518 273.3L1516.6 272.8L1513.2 269.5L1510.4 266.1L1508.4 263.3L1507 260.6L1505.6 258.5L1504.2 257.6L1504.8 259.6L1503.5 262.3L1500.1 263.3L1496.7 264.4L1496.3 266.4L1496.7 269.9L1499.4 270.6L1503.5 271.3L1505.6 273.3L1507 276.1L1507.7 280.2L1508 283.7L1507 286.4L1505.1 287.2L1504.2 283L1503.5 280.2L1501.5 279.5L1498.7 278.8L1496 276.8L1493.2 274.7L1490.5 273.3L1488.4 273L1487 274L1488.4 276.8L1487.8 279.4L1485.6 279.4L1482.2 279.4L1478.1 279L1473.9 278.7L1471.2 277.3L1469.1 278L1465.7 280.1L1462.6 281.7L1461.5 281.9L1458.8 280.6L1455.3 279.2L1451.9 276.8L1449.1 275.7L1445 276.1L1443 274.7L1438.9 276.5L1437.5 279.9L1434.1 280.6L1430.6 280.6L1429.2 282.7L1427.5 283.4L1429.9 287.5L1431 292.3L1430.6 293.8L1428.5 292.7L1425.8 292L1427.2 293.7L1428.5 295.1L1428.2 297.1L1427.2 299.2L1423.7 299.5L1421 299.9L1417.5 300.2L1414.8 299.5L1412 298.5L1410.6 296.4L1409.6 295.1L1408.6 296.4L1408.2 299.2L1407.2 300.6L1405.8 298.5L1404.8 296.4L1404.4 295.1L1402.4 292.3L1400.3 290.2L1398.2 289.2L1396.9 289.6L1397.6 291.6L1399.6 293.7L1401.7 295.8L1402.4 297.8L1400.3 299.5L1398.9 298.5L1400.3 296.4L1398.2 294.4L1396.2 292.3L1394.1 290.9L1393.4 289.6L1390.7 291.6L1388.6 292.3L1387.2 295.1L1385.8 297.8L1384.5 299.9L1381.7 300.9L1379 300.6L1378.3 297.8L1376.9 295.1Z"/><path fill="#333333" stroke="#333333" stroke-width=".5" stroke-linejoin="round" d="M1412.4 289.6L1414.1 288.5L1416.8 289.2L1418.2 288L1419.6 288.9L1422.3 290.2L1425.1 291.6L1427.2 292.4L1426.5 293.3L1422.3 293L1418.2 293L1414.8 293.3L1412.7 292.3L1412 290.9ZM1430.1 287.5L1432 286.2L1433.2 287.5L1432.5 290.9L1433.9 293.7L1436 295.8L1435.3 298.5L1433.4 297.8L1432 295.1L1431 292.3L1430.1 289.6ZM1400.3 266.8L1401.5 264.1L1403.2 263.4L1402.9 265.2L1401.7 267.9L1401.1 270.5L1401.8 272.6L1400.8 273.3L1400 270.5ZM1399.6 273L1402.4 272.3L1403.8 270.4L1405.8 269.3L1408.2 269.4L1407.9 270.3L1405.5 270.6L1404.8 272.3L1404.4 274.7L1402.4 275.4L1399.6 275.8L1397.6 276.8L1396.2 275.8L1397.6 274.7L1398.9 274.1ZM1410.4 261.6L1413.2 261.3L1414.6 262.7L1413.5 264.4L1411.1 264Z"/><path fill="#27ad70" stroke="#27ad70" stroke-width=".5" stroke-linejoin="round" d="M1367 262.3L1369.8 261.6L1373.2 261.3L1375 262.7L1374.6 264.4L1372.6 265.4L1369.8 265.8L1368.1 264.4ZM1391.1 244.4L1394.6 243.7L1398 243L1400.8 243.4L1399.4 245.1L1397.3 245.8L1396 248.2L1394.2 247.2L1392.5 245.8Z"/><path fill="#8a7a2a" stroke="#8a7a2a" stroke-width=".5" stroke-linejoin="round" d="M1411.1 242.3L1413.9 242L1416.6 241.6L1420.1 242.3L1419.4 243.4L1413.9 243.4Z"/><path fill="#ffdc19" stroke="#ffdc19" stroke-width=".5" stroke-linejoin="round" d="M1420.8 249.2L1422.8 247.8L1427.7 246.8L1427.3 248.2L1424.2 249.2L1422.8 251.3L1423.2 254L1424.9 255.4L1422.1 255.1L1420.4 252.7ZM1436.6 240.6L1439.4 241.3L1443.5 242.7L1446.3 243.7L1444.2 244.4L1440.1 243.4L1436.6 242.3ZM1467.4 244.4L1470.5 244.1L1474.6 244.4L1475 245.6L1471.2 246.1L1467.7 245.6ZM1505.6 273.3L1507 275L1509.1 277.8L1511.8 281L1511.3 281.5L1508.4 278.5L1506.3 275.7Z"/><path fill="#27ad70" stroke="#27ad70" stroke-width=".5" stroke-linejoin="round" d="M1389.1 268.5L1390.5 266.4L1393.2 264.7L1394.9 261.6L1397 258.5L1400.1 256.5L1403.5 255.4L1407 256.1L1404.9 257.5L1402.2 258.2L1399.4 259.2L1397.3 261.6L1396.3 264.4L1395.3 267.1L1394.9 270.6L1393.2 271.9L1391.1 272.6L1389.8 271.3Z"/><path fill="#dc172a" stroke="#dc172a" stroke-width=".5" stroke-linejoin="round" d="M1392.2 274.3L1394.1 273.4L1395.5 274.7L1395.2 276.7L1393.1 276.8Z"/><path fill="#ee691b" stroke="#ee691b" stroke-width=".5" stroke-linejoin="round" d="M1376.5 277.8L1379 276.5L1380.3 277.8L1379.6 280.3L1376.9 280.9Z"/><path fill="#ffdc19" stroke="#ffdc19" stroke-width=".5" stroke-linejoin="round" d="M1380.3 272.3L1382.4 271.6L1383.1 274.4L1384.5 276.5L1385.8 279.2L1386.5 281.3L1384.5 282.3L1381.7 282.7L1381 281.3L1382.7 279.9L1381.7 277.8L1380.7 275.8Z"/><path fill="#ee691b" stroke="#ee691b" stroke-width=".5" stroke-linejoin="round" d="M1376.5 293L1378.3 293.3L1378.6 297.8L1377.6 299.9L1376.5 297.8Z"/><path fill="#27ad70" stroke="#27ad70" stroke-width=".5" stroke-linejoin="round" d="M1407.2 275.4L1410.6 275.1L1412.7 277.8L1412 280.6L1408.6 280.9L1406.2 280.3L1406.5 277.5ZM1404.4 270.3L1407.9 270.1L1407.9 272.3L1404.8 272.5Z"/><path fill="#505050" stroke="#505050" stroke-width=".5" stroke-linejoin="round" d="M1404.4 272.5L1407.9 272.3L1407.5 275.1L1404.8 275.1Z"/><path fill="#27ad70" stroke="#27ad70" stroke-width=".5" stroke-linejoin="round" d="M1400.3 284L1404.4 283.9L1404.8 285.6L1400.7 285.8Z"/><path fill="#dc172a" stroke="#dc172a" stroke-width=".5" stroke-linejoin="round" d="M1400.3 285.8L1404.8 285.6L1404.4 287.6L1400.7 287.8ZM1400.3 289.6L1402.4 289.6L1402.7 291.6L1400.7 292Z"/><path fill="#27ad70" stroke="#27ad70" stroke-width=".5" stroke-linejoin="round" d="M1402.7 288.2L1405.5 288.2L1406.2 292.3L1403.8 292.7Z"/><path fill="#6fd095" stroke="#6fd095" stroke-width=".5" stroke-linejoin="round" d="M1405.1 286.1L1408.6 285.8L1411.3 287.5L1411.3 290.2L1410.6 293L1408.6 294.4L1406.5 293L1405.8 290.2L1405.1 288.2ZM1404.4 295.1L1407.2 295.1L1408.6 296.4L1408.2 299.2L1407.2 300.6L1405.8 298.5L1404.8 296.4ZM1408.6 301.3L1410.3 301.4L1410.2 302.6L1408.7 302.5Z"/><path fill="#ffdc19" stroke="#ffdc19" stroke-width=".5" stroke-linejoin="round" d="M1397.6 298.9L1400.3 298.5L1400.2 300.4L1398.2 300.6ZM1393.1 294.7L1394.7 294.4L1394.9 297.5L1393.4 297.8ZM1393.8 292.3L1394.7 292.3L1394.7 293.8L1393.8 293.8ZM1387.6 296.1L1388.9 295.9L1388.9 296.8L1387.6 296.9Z"/><path fill="#454545" stroke="#454545" stroke-width=".5" stroke-linejoin="round" d="M1417.5 301.6L1419.2 301.3L1419 302.3L1417.7 302.5Z"/><path fill="#ee691b" stroke="#ee691b" stroke-width=".5" stroke-linejoin="round" d="M1421 300.2L1425.1 300.2L1424.4 303.3L1422.3 306.8L1421 308.1L1420.6 304.7ZM1421.6 306.9L1424.2 305.8L1427.7 307.9L1431.8 310L1434.5 309.3L1436.6 312L1438.7 314.8L1440.7 315.5L1442.8 316.2L1442.8 319.6L1441.4 321.7L1437.3 323.8L1434.5 325.5L1432.1 324.8L1430.4 326.5L1428.9 323.6L1427.1 320.3L1425.1 316.9L1423.2 313.4L1421.8 310.7Z"/><path fill="#6fd095" stroke="#6fd095" stroke-width=".5" stroke-linejoin="round" d="M1428.5 297.1L1430.6 296.4L1433.4 299.2L1436.1 300.6L1439.6 298.5L1442.3 299.9L1444.4 303.3L1445.1 306.8L1447.1 310.2L1449.2 312.3L1447.8 314.3L1444.4 313.7L1441.6 312.3L1438.2 310.2L1435.4 307.5L1432.7 304.7L1430.6 301.3Z"/><path fill="#27ad70" stroke="#27ad70" stroke-width=".5" stroke-linejoin="round" d="M1448.2 309.9L1451.6 308.8L1453 306.1L1455.8 303.3L1455.1 300.6L1457.1 298.9L1460.4 300.6L1459 303.3L1459.7 306.8L1457.6 310.2L1456.2 312.3L1457.6 315L1454.7 315.7L1452 314.3L1449.2 314.5L1447.8 314.3L1449.2 312.3Z"/><path fill="#ee691b" stroke="#ee691b" stroke-width=".5" stroke-linejoin="round" d="M1461.5 281.9L1462.6 281.7L1465.7 283.1L1467.7 285.2L1469.1 287.2L1472.6 287.2L1474.6 289.3L1478.1 289.3L1481.5 290.7L1483.6 290L1486.3 288.6L1487.7 286.6L1489.8 284.5L1492 282.3L1487.8 279.4L1488.4 276.8L1487 274L1488.4 273L1490.5 273.3L1493.2 274.7L1496 276.8L1498.7 278.8L1501.5 279.5L1503.5 280.2L1504.2 283L1505.1 287.2L1503.5 287.9L1501.5 290.5L1499.4 290L1497.3 292.1L1498 293.4L1500.1 294.1L1502.2 294.8L1501.1 296.9L1502.2 299L1503.5 301L1504.9 303.1L1506.3 305.8L1506.6 308.6L1506 312L1504.2 314.8L1501.5 316.9L1499.4 318.2L1496.7 317.6L1494.6 316.2L1491.8 316.2L1490.5 316.9L1489.1 317.6L1487 315.5L1485.6 312.7L1484.3 309.3L1482.9 310L1481.2 312L1481.5 314.8L1480.1 317.2L1478.1 316.9L1476 318.2L1473.9 321.7L1471.9 325.1L1469.8 328.6L1469.8 332L1468.8 335.5L1467.4 337.2L1465.7 334.1L1463.9 329.9L1462.2 325.8L1460.8 322.4L1458.8 319.6L1456 316.9L1457.4 315.5L1456.7 312L1458.1 310.7L1459.8 307.2L1459.5 303.8L1460.8 301L1459.5 299L1456.7 296.9L1454 294.1L1451.9 291.4L1452.6 291.4L1455.3 290.5L1459.8 290.5L1459.5 288.5L1459.8 286.4Z"/><path fill="#505050" stroke="#505050" stroke-width=".5" stroke-linejoin="round" d="M1465.7 307.9L1467.7 307.2L1470.5 308.9L1473.9 310.3L1477.4 310.7L1477.4 311.7L1473.9 312L1470.5 310.7L1467 309.6ZM1481.5 314.8L1481.2 312L1482.9 310L1484.3 309.3L1485.6 312.7L1487 315.5L1489.1 317.6L1489.8 319.6L1487.7 320.3L1486.3 322.4L1485.6 325.8L1484.6 326.5L1483.6 323.1L1482.2 320.3L1480.8 317.6ZM1489.1 317.6L1490.5 316.9L1491.8 318.2L1493.9 321L1496 324.4L1497.3 328.6L1498 330.6L1496 332.7L1493.9 331.3L1493.2 328.6L1495.6 327.2L1496 324.4L1492.5 322.4L1489.8 320Z"/><path fill="#ee691b" stroke="#ee691b" stroke-width=".5" stroke-linejoin="round" d="M1487.7 320.3L1489.8 320L1492.5 322.4L1496 324.4L1495.6 327.2L1493.2 328.6L1492.5 330.6L1490.5 330.6L1490.1 334.1L1490.8 336.8L1493.2 340.3L1496 344.4L1496.3 347.2L1494.6 345.8L1492.5 342.3L1489.8 338.2L1489.1 334.8L1489.4 330.6L1489.1 328.6L1488.7 325.8L1487 323.8L1486.3 322.4Z"/><path fill="#ffdc19" stroke="#ffdc19" stroke-width=".5" stroke-linejoin="round" d="M1490.8 316.9L1493.2 316.2L1495.6 317.6L1495.3 320.3L1496.7 323.1L1498.7 325.8L1500.1 328.6L1500.4 331.3L1498.7 334.1L1496.7 335.8L1496 334.1L1498 331.3L1498 328.6L1496.7 325.8L1494.6 322.4L1493.2 319.6L1491.8 318.2Z"/><path fill="#ee691b" stroke="#ee691b" stroke-width=".5" stroke-linejoin="round" d="M1498 320.3L1499.8 320L1499.8 322L1498.4 322.4ZM1508 312L1509.4 312.4L1509.4 315.5L1508.4 315.8Z"/><path fill="#505050" stroke="#505050" stroke-width=".5" stroke-linejoin="round" d="M1503.5 290L1505.6 289.3L1507.3 291.4L1506 293.1L1504.2 292.1Z"/><path fill="#ee691b" stroke="#ee691b" stroke-width=".5" stroke-linejoin="round" d="M1505.6 292.8L1507.7 294.1L1509.7 296.9L1509.1 298.6L1507 297.6L1506 295.2ZM1516.6 290L1518.7 292.1L1520.1 295.5L1518.7 297.6L1515.9 299L1514.6 302.4L1513.2 301.7L1512.2 299.6L1513.2 297.6L1515.9 296.2L1517.3 294.1ZM1512.8 283L1514.6 282.6L1517 285L1515.9 287.1L1513.9 286.4ZM1514.6 288.5L1516.6 289.2L1519 292.6L1519.7 294.3L1517.3 294.3L1515.9 291.2ZM1511.1 300.3L1512.8 300.3L1512.8 302.7L1511.5 302.7Z"/><path fill="#6fd095" stroke="#6fd095" stroke-width=".5" stroke-linejoin="round" d="M1510.4 321.7L1512.5 321.3L1513.2 324.4L1512.2 327.2L1513.2 329.3L1511.8 329.9L1510.8 326.5ZM1513.9 328.6L1516.6 329.3L1518 332L1517.3 334.1L1519 334.8L1519.7 337.5L1518 339.6L1515.3 338.2L1515.3 336.1L1513.9 333.4L1513.2 330.6ZM1508.9 335.6L1512 332.6L1512.4 333L1509.3 336Z"/><path fill="#505050" stroke="#505050" stroke-width=".5" stroke-linejoin="round" d="M1470.1 335.5L1471.5 336.8L1471.5 339.2L1470.1 339.2Z"/><path fill="#ee691b" stroke="#ee691b" stroke-width=".5" stroke-linejoin="round" d="M1486.7 341L1489.1 341.3L1491.8 344.4L1494.6 348.5L1496.7 352L1498.4 354L1498 356.7L1496.3 356L1494.3 353.3L1492.2 349.8L1490.1 347.1L1488.4 344.4ZM1497.4 357.1L1500.5 357.7L1504.6 358.8L1508.7 360.5L1508 361.5L1503.2 360.5L1499.1 358.8ZM1511.5 361.2L1513.5 360.8L1515.6 361.5L1517.7 361.5L1517 362.6L1512.9 362.6Z"/><path fill="#454545" stroke="#454545" stroke-width=".5" stroke-linejoin="round" d="M1515.6 359.8L1519.1 359.1L1519.7 360.2L1516.3 361.2Z"/><path fill="#ee691b" stroke="#ee691b" stroke-width=".5" stroke-linejoin="round" d="M1501.5 346.5L1504.2 344.4L1507 341.7L1509.4 338.6L1511.8 340.3L1511.1 343.7L1510.4 347.2L1510.8 349.1L1509.4 351.9L1508 354L1505.3 352.6L1503.2 351.2L1503.2 347.8L1501.8 345ZM1512.2 348.4L1514.2 347.8L1515.6 349.8L1514.9 351.9L1516 355.3L1514.2 356L1513.2 353.3L1512.2 356L1511.8 352.6L1512.5 350.5ZM1519.7 351.9L1521.8 351.5L1523.9 352.6L1523.5 353.8L1520.4 353.6ZM1524.6 348.4L1527.3 349.1L1529.4 351.2L1531.5 350.9L1534.9 351.9L1535.2 361.5L1533.5 361.2L1532.1 358.8L1531.5 360.2L1530.8 357.4L1528.7 354.6L1526.6 352.6L1524.6 350.5Z"/><path fill="#505050" stroke="#505050" stroke-width=".5" stroke-linejoin="round" d="M1535.2 351.9L1537.7 352.9L1539.7 354.6L1541.1 356.7L1540.4 358.8L1542.5 362.2L1543.9 363.9L1541.8 363.3L1539.7 360.8L1538.3 358.8L1536.3 360.8L1535.2 361.5Z"/><path fill="#454545" stroke="#454545" stroke-width=".5" stroke-linejoin="round" d="M1543.5 356.7L1545.9 355.3L1548 354L1548.1 354.8L1546.3 356.4L1544 357.5Z"/><path fill="#dc172a" stroke="#dc172a" stroke-width=".5" stroke-linejoin="round" d="M1525.3 365.3L1527 366.4L1529.4 366.7L1528 369.1L1528.4 371.9L1530.8 373.9L1532.8 372.6L1534.2 369.1L1534.9 365.7L1535.6 364.3L1536.3 367L1537 371.2L1537.7 375.3L1538.3 379.4L1539.4 382.9L1539.7 386.3L1538.7 389.8L1537.7 393.2L1535.6 396.7L1532.8 399.4L1530.1 402.2L1527.3 404.2L1524.6 405.3L1521.8 405.6L1519.1 404.2L1518.4 402.2L1519.7 400.1L1517 400.8L1518.4 398L1516.3 397.3L1515.6 395.3L1513.5 394.2L1510.1 394.6L1506.7 396L1503.2 397L1499.8 397.7L1497.7 396.7L1499.1 393.9L1500.1 390.5L1499.8 387L1500.8 383.6L1501.8 380.1L1504.6 378.8L1508 377.4L1510.8 376L1512.2 373.9L1514.2 372.6L1515.6 370.5L1518.4 369.1L1521.1 368.8L1522.2 367L1523.9 365.7ZM1519.2 408.6L1521.3 408.9L1520.9 410.7L1519.4 411.7L1518 411.3ZM1531.3 418.4L1532.8 417L1536.3 415.5L1539.7 413.8L1542.3 412.1L1542.6 413.1L1540.4 414.5L1537 416.3L1533.5 419.2L1532 419.6ZM1544.4 412.2L1546.6 410L1548.5 407.4L1549.2 404.3L1550.2 404.7L1549.9 407.7L1549.8 409.2L1548 410.9L1545.4 412.7Z"/></svg>
</article>
<article class="tile" style="left:1223px;top:496px;width:352px;height:352px">
<h3 class="t tt" style="left:24px;top:21px;font-size:13px;transform:translateX(0.6px) scaleX(1.0389);">Most used 3rd party providers</h3>
<i class="r" style="left:216px;top:32px;width:111.2px;height:1px;background:#4a4a4a;"></i>
<span class="t st" style="left:25px;top:43px;font-size:13px;transform:translateX(0.58px) scaleX(1.2049);">www.easytravel.com</span>
<svg class="g" style="left:23px;top:104px;" width="306" height="122" viewBox="1246 600 306 122"><g fill="#dfbdf4"><rect x="1251.79" y="629.86" width="8.3" height="34.1"/><rect x="1264.21" y="622.64" width="8.3" height="36.7"/><rect x="1276.06" y="629.86" width="8.3" height="34.1"/><rect x="1288.2" y="620.33" width="8.3" height="37.86"/><rect x="1300.05" y="624.66" width="8.3" height="35.83"/><rect x="1311.61" y="633.04" width="8.3" height="30.92"/><rect x="1323.16" y="628.42" width="8.3" height="34.39"/><rect x="1335.01" y="621.48" width="8.3" height="36.7"/><rect x="1346.86" y="627.26" width="8.3" height="34.39"/><rect x="1358.13" y="631.89" width="8.3" height="33.23"/><rect x="1369.98" y="628.42" width="8.3" height="33.23"/><rect x="1381.83" y="618.02" width="8.3" height="40.17"/><rect x="1394.54" y="624.95" width="8.3" height="34.39"/><rect x="1406.39" y="642.58" width="8.3" height="28.61"/><rect x="1417.95" y="612.24" width="8.3" height="40.17"/><rect x="1429.8" y="620.33" width="8.3" height="37.86"/><rect x="1441.64" y="621.48" width="8.3" height="36.7"/><rect x="1453.2" y="631.89" width="8.3" height="32.08"/><rect x="1465.05" y="650.67" width="8.3" height="24.85"/><rect x="1476.32" y="619.17" width="8.3" height="37.86"/><rect x="1488.46" y="606.46" width="8.3" height="42.48"/><rect x="1500.02" y="633.04" width="8.3" height="33.23"/><rect x="1511.87" y="621.48" width="8.3" height="37.86"/><rect x="1523.42" y="684.48" width="8.3" height="13.58"/><rect x="1536.14" y="684.48" width="8.3" height="13.58"/></g><g fill="#5c2d84"><rect x="1251.79" y="663.96" width="8.3" height="26.3"/><rect x="1264.21" y="659.34" width="8.3" height="28.9"/><rect x="1276.06" y="663.96" width="8.3" height="27.45"/><rect x="1288.2" y="658.18" width="8.3" height="30.05"/><rect x="1300.05" y="660.5" width="8.3" height="28.9"/><rect x="1311.61" y="663.96" width="8.3" height="27.45"/><rect x="1323.16" y="662.81" width="8.3" height="27.45"/><rect x="1335.01" y="658.18" width="8.3" height="30.05"/><rect x="1346.86" y="661.65" width="8.3" height="27.74"/><rect x="1358.13" y="665.12" width="8.3" height="26.3"/><rect x="1369.98" y="661.65" width="8.3" height="28.61"/><rect x="1381.83" y="658.18" width="8.3" height="30.05"/><rect x="1394.54" y="659.34" width="8.3" height="30.05"/><rect x="1406.39" y="671.19" width="8.3" height="22.83"/><rect x="1417.95" y="652.4" width="8.3" height="33.52"/><rect x="1429.8" y="658.18" width="8.3" height="30.05"/><rect x="1441.64" y="658.18" width="8.3" height="30.05"/><rect x="1453.2" y="663.96" width="8.3" height="26.3"/><rect x="1465.05" y="675.52" width="8.3" height="21.96"/><rect x="1476.32" y="657.03" width="8.3" height="31.21"/><rect x="1488.46" y="648.94" width="8.3" height="34.68"/><rect x="1500.02" y="666.28" width="8.3" height="26.59"/><rect x="1511.87" y="659.34" width="8.3" height="28.9"/><rect x="1523.42" y="698.06" width="8.3" height="10.11"/><rect x="1536.14" y="698.06" width="8.3" height="10.11"/></g><g fill="#9463ad"><rect x="1251.79" y="690.26" width="8.3" height="28.74"/><rect x="1264.21" y="688.24" width="8.3" height="30.76"/><rect x="1276.06" y="691.42" width="8.3" height="27.58"/><rect x="1288.2" y="688.24" width="8.3" height="30.76"/><rect x="1300.05" y="689.39" width="8.3" height="29.61"/><rect x="1311.61" y="691.42" width="8.3" height="27.58"/><rect x="1323.16" y="690.26" width="8.3" height="28.74"/><rect x="1335.01" y="688.24" width="8.3" height="30.76"/><rect x="1346.86" y="689.39" width="8.3" height="29.61"/><rect x="1358.13" y="691.42" width="8.3" height="27.58"/><rect x="1369.98" y="690.26" width="8.3" height="28.74"/><rect x="1381.83" y="688.24" width="8.3" height="30.76"/><rect x="1394.54" y="689.39" width="8.3" height="29.61"/><rect x="1406.39" y="694.02" width="8.3" height="24.98"/><rect x="1417.95" y="685.93" width="8.3" height="33.07"/><rect x="1429.8" y="688.24" width="8.3" height="30.76"/><rect x="1441.64" y="688.24" width="8.3" height="30.76"/><rect x="1453.2" y="690.26" width="8.3" height="28.74"/><rect x="1465.05" y="697.48" width="8.3" height="21.52"/><rect x="1476.32" y="688.24" width="8.3" height="30.76"/><rect x="1488.46" y="683.61" width="8.3" height="35.39"/><rect x="1500.02" y="692.86" width="8.3" height="26.14"/><rect x="1511.87" y="688.24" width="8.3" height="30.76"/><rect x="1523.42" y="708.18" width="8.3" height="10.82"/><rect x="1536.14" y="708.18" width="8.3" height="10.82"/></g><rect x="1248" y="718.8" width="301.4" height="1" fill="#5a5a5a"/></svg>
<span class="t tt" style="left:40px;top:233px;font-size:14px;transform:translateX(0.14px) scaleX(1.0039);">12:00</span>
<span class="t tt" style="left:111px;top:233px;font-size:14px;transform:translateX(0.14px) scaleX(1.0059);">12:30</span>
<span class="t tt" style="left:181px;top:233px;font-size:14px;transform:translateX(0.91px) scaleX(1.0127);">13:00</span>
<span class="t tt" style="left:252px;top:233px;font-size:14px;transform:translateX(0.68px) scaleX(1.0261);">13:30</span>
<svg class="g" style="left:26px;top:268.6px;" width="10" height="9" viewBox="1249 764.6 10 9"><rect x="1249.5" y="768" width="1.9" height="5" fill="#dfbdf4"/><rect x="1252.9" y="765" width="1.9" height="8" fill="#dfbdf4"/><rect x="1256.3" y="766.6" width="1.9" height="6.4" fill="#dfbdf4"/></svg>
<span class="t" style="left:39px;top:269px;font-size:13px;color:#8c8c8c;transform:translateX(0.77px) scaleX(0.9930);">cfapps.io</span>
<span class="t nm" style="left:265px;top:267px;font-size:15px;transform:translateX(0.15px) scaleX(1.1145);">88.9</span>
<span class="t" style="left:301px;top:269px;font-size:13px;color:#8c8c8c;transform:translateX(0.91px) scaleX(1.0387);">/min</span>
<svg class="g" style="left:26px;top:292.4px;" width="10" height="9" viewBox="1249 788.4 10 9"><rect x="1249.5" y="791.8" width="1.9" height="5" fill="#5c2d84"/><rect x="1252.9" y="788.8" width="1.9" height="8" fill="#5c2d84"/><rect x="1256.3" y="790.4" width="1.9" height="6.4" fill="#5c2d84"/></svg>
<span class="t" style="left:39px;top:293px;font-size:13px;color:#8c8c8c;transform:translateX(0.7px);">dynatrace.com</span>
<span class="t nm" style="left:272px;top:291px;font-size:15px;clip-path:polygon(-2px -2px,calc(100% + 2px) -2px,calc(100% + 2px) calc(100% + 2px),29.5px calc(100% + 2px),29.5px 10px,26.76px 10px,26.76px calc(100% + 2px),23.91px calc(100% + 2px),23.91px 10px,20.56px 10px,20.56px calc(100% + 2px),-2px calc(100% + 2px));transform:translateX(0.11px) scaleX(0.9388);">74.1</span>
<span class="t" style="left:301px;top:293px;font-size:13px;color:#8c8c8c;transform:translateX(0.91px) scaleX(1.0387);">/min</span>
<svg class="g" style="left:26px;top:315.4px;" width="10" height="9" viewBox="1249 811.4 10 9"><rect x="1249.5" y="814.8" width="1.9" height="5" fill="#9463ad"/><rect x="1252.9" y="811.8" width="1.9" height="8" fill="#9463ad"/><rect x="1256.3" y="813.4" width="1.9" height="6.4" fill="#9463ad"/></svg>
<span class="t" style="left:39px;top:316px;font-size:13px;color:#8c8c8c;transform:translateX(0.75px) scaleX(0.9760);">google.com</span>
<span class="t nm" style="left:268px;top:314px;font-size:15px;transform:translateX(0.36px) scaleX(0.9847);">73.4</span>
<span class="t" style="left:301px;top:316px;font-size:13px;color:#8c8c8c;transform:translateX(0.91px) scaleX(1.0387);">/min</span>
</article>
</section>
</main>
</body></html>
